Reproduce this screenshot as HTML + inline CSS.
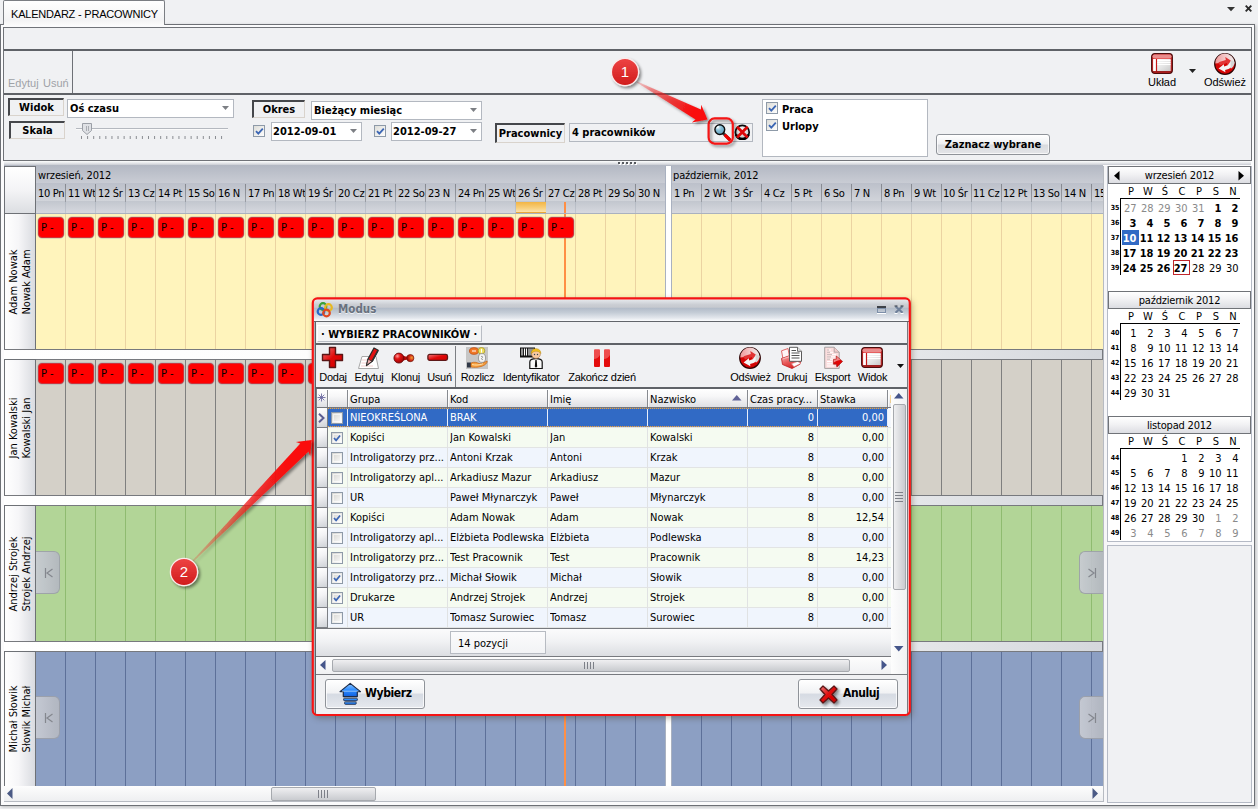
<!DOCTYPE html>
<html lang="pl"><head><meta charset="utf-8"><title>Kalendarz - Pracownicy</title>
<style>
html,body{margin:0;padding:0}
body{width:1258px;height:809px;overflow:hidden;background:#f0f1f3;position:relative;font-family:'DejaVu Sans Condensed','Liberation Sans',sans-serif;font-size:11px;color:#000}
div,svg{position:absolute;box-sizing:border-box}
.t{font-family:'DejaVu Sans Condensed','Liberation Sans',sans-serif;font-size:11px;line-height:13px;white-space:nowrap}
.a{font-family:'Liberation Sans',sans-serif;font-size:11px;line-height:12px;white-space:nowrap}
.rot{transform:rotate(-90deg);transform-origin:50% 50%}
</style></head>
<body>
<!-- part1 -->
<div style="left:0px;top:24px;width:1255px;height:782px;border:1px solid #6d7075;background:#fbfbfc;box-shadow:1px 1px 3px rgba(0,0,0,.22)"></div>
<div style="left:3px;top:0px;width:162px;height:25px;border:1px solid #7b7e83;border-bottom:none;border-radius:2px 2px 0 0;background:linear-gradient(#ffffff,#f3f3f4 80%,#fafafa)"></div>
<div class="a" style="left:11px;top:8px;letter-spacing:-0.21px">KALENDARZ - PRACOWNICY</div>
<svg style="left:1224px;top:3px" width="32" height="12"><path d="M3 4h8l-4 4.3z" fill="#333"/><path d="M21.7 2.7l5.6 5.6m0-5.6l-5.6 5.6" stroke="#2b2b2b" stroke-width="1.9" fill="none"/></svg>
<div style="left:3px;top:27px;width:1249px;height:134px;border:1px solid #707378;background:#f0f1f3"></div>
<div style="left:4px;top:49px;width:1247px;height:2px;background:#5f6267"></div>
<div style="left:4px;top:93px;width:1247px;height:2px;background:#5f6267"></div>
<div style="left:72px;top:51px;width:1px;height:42px;background:#6e7176"></div>
<div class="a" style="left:8px;top:77px;color:#9fa2a7">Edytuj</div>
<div class="a" style="left:43px;top:77px;color:#9fa2a7">Usuń</div>
<div class="t" style="left:8px;top:98px;width:56px;height:18px;border-top:2px solid #45474b;border-left:2px solid #45474b;border-right:1px solid #d9d3cc;border-bottom:1px solid #d9d3cc;background:#f0f1f3;text-align:center;font-weight:bold;line-height:15px">Widok</div>
<div class="t" style="left:9px;top:121px;width:56px;height:18px;border-top:2px solid #45474b;border-left:2px solid #45474b;border-right:1px solid #d9d3cc;border-bottom:1px solid #d9d3cc;background:#f0f1f3;text-align:center;font-weight:bold;line-height:15px">Skala</div>
<div class="t" style="left:252px;top:100px;width:53px;height:18px;border-top:2px solid #45474b;border-left:2px solid #45474b;border-right:1px solid #d9d3cc;border-bottom:1px solid #d9d3cc;background:#f0f1f3;text-align:center;font-weight:bold;line-height:15px">Okres</div>
<div class="t" style="left:495px;top:123px;width:70px;height:20px;border-top:2px solid #45474b;border-left:2px solid #45474b;border-right:1px solid #d9d3cc;border-bottom:1px solid #d9d3cc;background:#f0f1f3;text-align:center;font-weight:bold;line-height:17px">Pracownicy</div>
<div class="t" style="left:67px;top:99px;width:167px;height:19px;border:1px solid #b3b8c0;background:#fff;font-weight:bold;line-height:17px;padding-left:2px">Oś czasu<svg style="right:4px;top:6px" width="7" height="4"><path d="M0 0h7l-3.5 4z" fill="#7c7f84"/></svg></div>
<div class="t" style="left:311px;top:101px;width:171px;height:19px;border:1px solid #b3b8c0;background:#fff;font-weight:bold;line-height:17px;padding-left:2px">Bieżący miesiąc<svg style="right:4px;top:6px" width="7" height="4"><path d="M0 0h7l-3.5 4z" fill="#7c7f84"/></svg></div>
<div class="t" style="left:271px;top:122px;width:91px;height:19px;border:1px solid #b3b8c0;background:#fff;font-weight:bold;line-height:17px;padding-left:1px">2012-09-01<svg style="right:4px;top:6px" width="7" height="4"><path d="M0 0h7l-3.5 4z" fill="#7c7f84"/></svg></div>
<div class="t" style="left:391px;top:122px;width:91px;height:19px;border:1px solid #b3b8c0;background:#fff;font-weight:bold;line-height:17px;padding-left:1px">2012-09-27<svg style="right:4px;top:6px" width="7" height="4"><path d="M0 0h7l-3.5 4z" fill="#7c7f84"/></svg></div>
<div style="left:76px;top:128px;width:152px;height:1px;background:#b4b8bf"></div>
<div style="left:76px;top:129px;width:152px;height:1px;background:#fafafa"></div>
<svg style="left:81px;top:122px" width="13" height="14"><path d="M1.5 1.5h9v7l-4.5 4-4.5-4z" fill="#dfe1e5" stroke="#9b9fa6"/><path d="M5.5 4v5M7.5 4v5" stroke="#aaadb3"/></svg>
<svg style="left:81px;top:136px" width="150" height="4"><rect x="0.00" y="0" width="1" height="3" fill="#8a8d92"/><rect x="6.09" y="0" width="1" height="3" fill="#8a8d92"/><rect x="12.18" y="0" width="1" height="3" fill="#8a8d92"/><rect x="18.27" y="0" width="1" height="3" fill="#8a8d92"/><rect x="24.36" y="0" width="1" height="3" fill="#8a8d92"/><rect x="30.45" y="0" width="1" height="3" fill="#8a8d92"/><rect x="36.54" y="0" width="1" height="3" fill="#8a8d92"/><rect x="42.63" y="0" width="1" height="3" fill="#8a8d92"/><rect x="48.72" y="0" width="1" height="3" fill="#8a8d92"/><rect x="54.81" y="0" width="1" height="3" fill="#8a8d92"/><rect x="60.90" y="0" width="1" height="3" fill="#8a8d92"/><rect x="66.99" y="0" width="1" height="3" fill="#8a8d92"/><rect x="73.08" y="0" width="1" height="3" fill="#8a8d92"/><rect x="79.17" y="0" width="1" height="3" fill="#8a8d92"/><rect x="85.26" y="0" width="1" height="3" fill="#8a8d92"/><rect x="91.35" y="0" width="1" height="3" fill="#8a8d92"/><rect x="97.44" y="0" width="1" height="3" fill="#8a8d92"/><rect x="103.53" y="0" width="1" height="3" fill="#8a8d92"/><rect x="109.62" y="0" width="1" height="3" fill="#8a8d92"/><rect x="115.71" y="0" width="1" height="3" fill="#8a8d92"/><rect x="121.80" y="0" width="1" height="3" fill="#8a8d92"/><rect x="127.89" y="0" width="1" height="3" fill="#8a8d92"/><rect x="133.98" y="0" width="1" height="3" fill="#8a8d92"/><rect x="140.07" y="0" width="1" height="3" fill="#8a8d92"/></svg>
<svg style="left:253px;top:125px" width="12" height="12"><defs><linearGradient id="cg253_125" x1="0" y1="0" x2="1" y2="1"><stop offset="0" stop-color="#dcdcd7"/><stop offset="1" stop-color="#ffffff"/></linearGradient></defs><rect x=".5" y=".5" width="11" height="11" fill="url(#cg253_125)" stroke="#8e9aa8"/><path d="M3 6.2l2.3 2.5 4.5-5" stroke="#3c66b4" stroke-width="1.8" fill="none"/></svg>
<svg style="left:374px;top:125px" width="12" height="12"><defs><linearGradient id="cg374_125" x1="0" y1="0" x2="1" y2="1"><stop offset="0" stop-color="#dcdcd7"/><stop offset="1" stop-color="#ffffff"/></linearGradient></defs><rect x=".5" y=".5" width="11" height="11" fill="url(#cg374_125)" stroke="#8e9aa8"/><path d="M3 6.2l2.3 2.5 4.5-5" stroke="#3c66b4" stroke-width="1.8" fill="none"/></svg>
<div class="t" style="left:569px;top:123px;width:182px;height:17px;border:1px solid #b3b8c0;background:#f0f1f3;font-weight:bold;line-height:18px;padding-left:2px;box-sizing:content-box;width:180px">4 pracowników</div>
<div style="left:762px;top:99px;width:166px;height:58px;border:1px solid #b3b8c0;background:#fff"></div>
<svg style="left:766px;top:102px" width="12" height="12"><defs><linearGradient id="cg766_102" x1="0" y1="0" x2="1" y2="1"><stop offset="0" stop-color="#dcdcd7"/><stop offset="1" stop-color="#ffffff"/></linearGradient></defs><rect x=".5" y=".5" width="11" height="11" fill="url(#cg766_102)" stroke="#8e9aa8"/><path d="M3 6.2l2.3 2.5 4.5-5" stroke="#3c66b4" stroke-width="1.8" fill="none"/></svg>
<svg style="left:766px;top:119px" width="12" height="12"><defs><linearGradient id="cg766_119" x1="0" y1="0" x2="1" y2="1"><stop offset="0" stop-color="#dcdcd7"/><stop offset="1" stop-color="#ffffff"/></linearGradient></defs><rect x=".5" y=".5" width="11" height="11" fill="url(#cg766_119)" stroke="#8e9aa8"/><path d="M3 6.2l2.3 2.5 4.5-5" stroke="#3c66b4" stroke-width="1.8" fill="none"/></svg>
<div class="t" style="left:782px;top:103px;font-weight:bold">Praca</div>
<div class="t" style="left:782px;top:120px;font-weight:bold">Urlopy</div>
<div class="t" style="left:936px;top:134px;width:114px;height:21px;border:1px solid #8f9399;border-radius:3px;background:linear-gradient(#ffffff,#f0f1f3 45%,#d9dbdf 55%,#e4e5e8);text-align:center;font-weight:bold;line-height:19px;box-shadow:inset 0 0 0 1px rgba(255,255,255,.7)">Zaznacz wybrane</div>
<div class="a" style="left:1132.0px;width:60px;text-align:center;top:76px;">Układ</div>
<div class="a" style="left:1195.0px;width:60px;text-align:center;top:76px;">Odśwież</div>
<svg style="left:1189px;top:69px" width="7" height="4"><path d="M0 0h7l-3.5 4z" fill="#222"/></svg>
<!-- part2 -->
<div style="left:4px;top:161px;width:1247px;height:4px;background:linear-gradient(#fdfdfd,#e6e8eb 50%,#c9ccd3)"></div>
<svg style="left:617px;top:161px" width="24" height="5"><rect x="2" y="2" width="2" height="2" fill="#fff"/><rect x="1" y="1" width="2" height="2" fill="#55585d"/><rect x="6" y="2" width="2" height="2" fill="#fff"/><rect x="5" y="1" width="2" height="2" fill="#55585d"/><rect x="10" y="2" width="2" height="2" fill="#fff"/><rect x="9" y="1" width="2" height="2" fill="#55585d"/><rect x="14" y="2" width="2" height="2" fill="#fff"/><rect x="13" y="1" width="2" height="2" fill="#55585d"/><rect x="18" y="2" width="2" height="2" fill="#fff"/><rect x="17" y="1" width="2" height="2" fill="#55585d"/></svg>
<div style="left:4px;top:165px;width:1099px;height:18px;background:linear-gradient(#b3b8c3,#c9ccd4)"></div>
<div style="left:4px;top:183px;width:1099px;height:18px;background:linear-gradient(#bcc0ca,#d1d4da)"></div>
<div style="left:4px;top:201px;width:1099px;height:13px;background:linear-gradient(#c2c6ce,#d8dae0)"></div>
<div style="left:65px;top:184px;width:1px;height:18px;background:linear-gradient(#85888f,#9a9da4)"></div>
<div style="left:65px;top:202px;width:1px;height:11px;background:rgba(120,130,150,.22)"></div>
<div style="left:95px;top:184px;width:1px;height:18px;background:linear-gradient(#85888f,#9a9da4)"></div>
<div style="left:95px;top:202px;width:1px;height:11px;background:rgba(120,130,150,.22)"></div>
<div style="left:125px;top:184px;width:1px;height:18px;background:linear-gradient(#85888f,#9a9da4)"></div>
<div style="left:125px;top:202px;width:1px;height:11px;background:rgba(120,130,150,.22)"></div>
<div style="left:155px;top:184px;width:1px;height:18px;background:linear-gradient(#85888f,#9a9da4)"></div>
<div style="left:155px;top:202px;width:1px;height:11px;background:rgba(120,130,150,.22)"></div>
<div style="left:185px;top:184px;width:1px;height:18px;background:linear-gradient(#85888f,#9a9da4)"></div>
<div style="left:185px;top:202px;width:1px;height:11px;background:rgba(120,130,150,.22)"></div>
<div style="left:215px;top:184px;width:1px;height:18px;background:linear-gradient(#85888f,#9a9da4)"></div>
<div style="left:215px;top:202px;width:1px;height:11px;background:rgba(120,130,150,.22)"></div>
<div style="left:245px;top:184px;width:1px;height:18px;background:linear-gradient(#85888f,#9a9da4)"></div>
<div style="left:245px;top:202px;width:1px;height:11px;background:rgba(120,130,150,.22)"></div>
<div style="left:275px;top:184px;width:1px;height:18px;background:linear-gradient(#85888f,#9a9da4)"></div>
<div style="left:275px;top:202px;width:1px;height:11px;background:rgba(120,130,150,.22)"></div>
<div style="left:305px;top:184px;width:1px;height:18px;background:linear-gradient(#85888f,#9a9da4)"></div>
<div style="left:305px;top:202px;width:1px;height:11px;background:rgba(120,130,150,.22)"></div>
<div style="left:335px;top:184px;width:1px;height:18px;background:linear-gradient(#85888f,#9a9da4)"></div>
<div style="left:335px;top:202px;width:1px;height:11px;background:rgba(120,130,150,.22)"></div>
<div style="left:365px;top:184px;width:1px;height:18px;background:linear-gradient(#85888f,#9a9da4)"></div>
<div style="left:365px;top:202px;width:1px;height:11px;background:rgba(120,130,150,.22)"></div>
<div style="left:395px;top:184px;width:1px;height:18px;background:linear-gradient(#85888f,#9a9da4)"></div>
<div style="left:395px;top:202px;width:1px;height:11px;background:rgba(120,130,150,.22)"></div>
<div style="left:425px;top:184px;width:1px;height:18px;background:linear-gradient(#85888f,#9a9da4)"></div>
<div style="left:425px;top:202px;width:1px;height:11px;background:rgba(120,130,150,.22)"></div>
<div style="left:455px;top:184px;width:1px;height:18px;background:linear-gradient(#85888f,#9a9da4)"></div>
<div style="left:455px;top:202px;width:1px;height:11px;background:rgba(120,130,150,.22)"></div>
<div style="left:485px;top:184px;width:1px;height:18px;background:linear-gradient(#85888f,#9a9da4)"></div>
<div style="left:485px;top:202px;width:1px;height:11px;background:rgba(120,130,150,.22)"></div>
<div style="left:515px;top:184px;width:1px;height:18px;background:linear-gradient(#85888f,#9a9da4)"></div>
<div style="left:515px;top:202px;width:1px;height:11px;background:rgba(120,130,150,.22)"></div>
<div style="left:545px;top:184px;width:1px;height:18px;background:linear-gradient(#85888f,#9a9da4)"></div>
<div style="left:545px;top:202px;width:1px;height:11px;background:rgba(120,130,150,.22)"></div>
<div style="left:575px;top:184px;width:1px;height:18px;background:linear-gradient(#85888f,#9a9da4)"></div>
<div style="left:575px;top:202px;width:1px;height:11px;background:rgba(120,130,150,.22)"></div>
<div style="left:605px;top:184px;width:1px;height:18px;background:linear-gradient(#85888f,#9a9da4)"></div>
<div style="left:605px;top:202px;width:1px;height:11px;background:rgba(120,130,150,.22)"></div>
<div style="left:635px;top:184px;width:1px;height:18px;background:linear-gradient(#85888f,#9a9da4)"></div>
<div style="left:635px;top:202px;width:1px;height:11px;background:rgba(120,130,150,.22)"></div>
<div style="left:665px;top:184px;width:1px;height:18px;background:linear-gradient(#85888f,#9a9da4)"></div>
<div style="left:665px;top:202px;width:1px;height:11px;background:rgba(120,130,150,.22)"></div>
<div style="left:701px;top:184px;width:1px;height:18px;background:linear-gradient(#85888f,#9a9da4)"></div>
<div style="left:701px;top:202px;width:1px;height:11px;background:rgba(120,130,150,.22)"></div>
<div style="left:731px;top:184px;width:1px;height:18px;background:linear-gradient(#85888f,#9a9da4)"></div>
<div style="left:731px;top:202px;width:1px;height:11px;background:rgba(120,130,150,.22)"></div>
<div style="left:761px;top:184px;width:1px;height:18px;background:linear-gradient(#85888f,#9a9da4)"></div>
<div style="left:761px;top:202px;width:1px;height:11px;background:rgba(120,130,150,.22)"></div>
<div style="left:791px;top:184px;width:1px;height:18px;background:linear-gradient(#85888f,#9a9da4)"></div>
<div style="left:791px;top:202px;width:1px;height:11px;background:rgba(120,130,150,.22)"></div>
<div style="left:821px;top:184px;width:1px;height:18px;background:linear-gradient(#85888f,#9a9da4)"></div>
<div style="left:821px;top:202px;width:1px;height:11px;background:rgba(120,130,150,.22)"></div>
<div style="left:851px;top:184px;width:1px;height:18px;background:linear-gradient(#85888f,#9a9da4)"></div>
<div style="left:851px;top:202px;width:1px;height:11px;background:rgba(120,130,150,.22)"></div>
<div style="left:881px;top:184px;width:1px;height:18px;background:linear-gradient(#85888f,#9a9da4)"></div>
<div style="left:881px;top:202px;width:1px;height:11px;background:rgba(120,130,150,.22)"></div>
<div style="left:911px;top:184px;width:1px;height:18px;background:linear-gradient(#85888f,#9a9da4)"></div>
<div style="left:911px;top:202px;width:1px;height:11px;background:rgba(120,130,150,.22)"></div>
<div style="left:941px;top:184px;width:1px;height:18px;background:linear-gradient(#85888f,#9a9da4)"></div>
<div style="left:941px;top:202px;width:1px;height:11px;background:rgba(120,130,150,.22)"></div>
<div style="left:971px;top:184px;width:1px;height:18px;background:linear-gradient(#85888f,#9a9da4)"></div>
<div style="left:971px;top:202px;width:1px;height:11px;background:rgba(120,130,150,.22)"></div>
<div style="left:1001px;top:184px;width:1px;height:18px;background:linear-gradient(#85888f,#9a9da4)"></div>
<div style="left:1001px;top:202px;width:1px;height:11px;background:rgba(120,130,150,.22)"></div>
<div style="left:1031px;top:184px;width:1px;height:18px;background:linear-gradient(#85888f,#9a9da4)"></div>
<div style="left:1031px;top:202px;width:1px;height:11px;background:rgba(120,130,150,.22)"></div>
<div style="left:1061px;top:184px;width:1px;height:18px;background:linear-gradient(#85888f,#9a9da4)"></div>
<div style="left:1061px;top:202px;width:1px;height:11px;background:rgba(120,130,150,.22)"></div>
<div style="left:1091px;top:184px;width:1px;height:18px;background:linear-gradient(#85888f,#9a9da4)"></div>
<div style="left:1091px;top:202px;width:1px;height:11px;background:rgba(120,130,150,.22)"></div>
<div style="left:4px;top:166px;width:32px;height:48px;border:1px solid #6e7176;background:linear-gradient(#ffffff,#f4f4f6 50%,#dcdee2)"></div>
<div class="t" style="left:38px;top:169px;letter-spacing:-0.15px">wrzesień, 2012</div>
<div class="t" style="left:673px;top:169px;letter-spacing:-0.15px">październik, 2012</div>
<div class="t" style="left:38px;top:187px;width:27px;height:14px;overflow:hidden;line-height:13px;white-space:nowrap;letter-spacing:-0.3px">10 Pn</div>
<div class="t" style="left:68px;top:187px;width:27px;height:14px;overflow:hidden;line-height:13px;white-space:nowrap;letter-spacing:-0.3px">11 Wt</div>
<div class="t" style="left:98px;top:187px;width:27px;height:14px;overflow:hidden;line-height:13px;white-space:nowrap;letter-spacing:-0.3px">12 Śr</div>
<div class="t" style="left:128px;top:187px;width:27px;height:14px;overflow:hidden;line-height:13px;white-space:nowrap;letter-spacing:-0.3px">13 Cz</div>
<div class="t" style="left:158px;top:187px;width:27px;height:14px;overflow:hidden;line-height:13px;white-space:nowrap;letter-spacing:-0.3px">14 Pt</div>
<div class="t" style="left:188px;top:187px;width:27px;height:14px;overflow:hidden;line-height:13px;white-space:nowrap;letter-spacing:-0.3px">15 So</div>
<div class="t" style="left:218px;top:187px;width:27px;height:14px;overflow:hidden;line-height:13px;white-space:nowrap;letter-spacing:-0.3px">16 N</div>
<div class="t" style="left:248px;top:187px;width:27px;height:14px;overflow:hidden;line-height:13px;white-space:nowrap;letter-spacing:-0.3px">17 Pn</div>
<div class="t" style="left:278px;top:187px;width:27px;height:14px;overflow:hidden;line-height:13px;white-space:nowrap;letter-spacing:-0.3px">18 Wt</div>
<div class="t" style="left:308px;top:187px;width:27px;height:14px;overflow:hidden;line-height:13px;white-space:nowrap;letter-spacing:-0.3px">19 Śr</div>
<div class="t" style="left:338px;top:187px;width:27px;height:14px;overflow:hidden;line-height:13px;white-space:nowrap;letter-spacing:-0.3px">20 Cz</div>
<div class="t" style="left:368px;top:187px;width:27px;height:14px;overflow:hidden;line-height:13px;white-space:nowrap;letter-spacing:-0.3px">21 Pt</div>
<div class="t" style="left:398px;top:187px;width:27px;height:14px;overflow:hidden;line-height:13px;white-space:nowrap;letter-spacing:-0.3px">22 So</div>
<div class="t" style="left:428px;top:187px;width:27px;height:14px;overflow:hidden;line-height:13px;white-space:nowrap;letter-spacing:-0.3px">23 N</div>
<div class="t" style="left:458px;top:187px;width:27px;height:14px;overflow:hidden;line-height:13px;white-space:nowrap;letter-spacing:-0.3px">24 Pn</div>
<div class="t" style="left:488px;top:187px;width:27px;height:14px;overflow:hidden;line-height:13px;white-space:nowrap;letter-spacing:-0.3px">25 Wt</div>
<div class="t" style="left:518px;top:187px;width:27px;height:14px;overflow:hidden;line-height:13px;white-space:nowrap;letter-spacing:-0.3px">26 Śr</div>
<div class="t" style="left:548px;top:187px;width:27px;height:14px;overflow:hidden;line-height:13px;white-space:nowrap;letter-spacing:-0.3px">27 Cz</div>
<div class="t" style="left:578px;top:187px;width:27px;height:14px;overflow:hidden;line-height:13px;white-space:nowrap;letter-spacing:-0.3px">28 Pt</div>
<div class="t" style="left:608px;top:187px;width:27px;height:14px;overflow:hidden;line-height:13px;white-space:nowrap;letter-spacing:-0.3px">29 So</div>
<div class="t" style="left:638px;top:187px;width:27px;height:14px;overflow:hidden;line-height:13px;white-space:nowrap;letter-spacing:-0.3px">30 N</div>
<div class="t" style="left:674px;top:187px;width:28px;height:14px;overflow:hidden;line-height:13px;white-space:nowrap;letter-spacing:-0.3px">1 Pn</div>
<div class="t" style="left:704px;top:187px;width:28px;height:14px;overflow:hidden;line-height:13px;white-space:nowrap;letter-spacing:-0.3px">2 Wt</div>
<div class="t" style="left:734px;top:187px;width:28px;height:14px;overflow:hidden;line-height:13px;white-space:nowrap;letter-spacing:-0.3px">3 Śr</div>
<div class="t" style="left:764px;top:187px;width:28px;height:14px;overflow:hidden;line-height:13px;white-space:nowrap;letter-spacing:-0.3px">4 Cz</div>
<div class="t" style="left:794px;top:187px;width:28px;height:14px;overflow:hidden;line-height:13px;white-space:nowrap;letter-spacing:-0.3px">5 Pt</div>
<div class="t" style="left:824px;top:187px;width:28px;height:14px;overflow:hidden;line-height:13px;white-space:nowrap;letter-spacing:-0.3px">6 So</div>
<div class="t" style="left:854px;top:187px;width:28px;height:14px;overflow:hidden;line-height:13px;white-space:nowrap;letter-spacing:-0.3px">7 N</div>
<div class="t" style="left:884px;top:187px;width:28px;height:14px;overflow:hidden;line-height:13px;white-space:nowrap;letter-spacing:-0.3px">8 Pn</div>
<div class="t" style="left:914px;top:187px;width:28px;height:14px;overflow:hidden;line-height:13px;white-space:nowrap;letter-spacing:-0.3px">9 Wt</div>
<div class="t" style="left:943px;top:187px;width:28px;height:14px;overflow:hidden;line-height:13px;white-space:nowrap;letter-spacing:-0.3px">10 Śr</div>
<div class="t" style="left:973px;top:187px;width:28px;height:14px;overflow:hidden;line-height:13px;white-space:nowrap;letter-spacing:-0.3px">11 Cz</div>
<div class="t" style="left:1003px;top:187px;width:28px;height:14px;overflow:hidden;line-height:13px;white-space:nowrap;letter-spacing:-0.3px">12 Pt</div>
<div class="t" style="left:1033px;top:187px;width:28px;height:14px;overflow:hidden;line-height:13px;white-space:nowrap;letter-spacing:-0.3px">13 So</div>
<div class="t" style="left:1064px;top:187px;width:28px;height:14px;overflow:hidden;line-height:13px;white-space:nowrap;letter-spacing:-0.3px">14 N</div>
<div class="t" style="left:1094px;top:187px;width:11px;height:14px;overflow:hidden;line-height:13px;white-space:nowrap;letter-spacing:-0.3px">15</div>
<div style="left:516px;top:202px;width:30px;height:11px;background:linear-gradient(#f3b544,#f8cf7c 60%,#fbe3ad);border-bottom:1px solid #eaa83a"></div>
<div style="left:36px;top:214px;width:630px;height:135px;background:repeating-linear-gradient(to right,transparent 0,transparent 29px,#ebd3a2 29px,#ebd3a2 30px),#fff4bc"></div>
<div style="left:672px;top:214px;width:431px;height:135px;background:repeating-linear-gradient(to right,transparent 0,transparent 29px,#ebd3a2 29px,#ebd3a2 30px),#fff4bc"></div>
<div style="left:4px;top:213px;width:32px;height:137px;border:1px solid #6e7176;background:linear-gradient(to right,#ffffff,#f6f6f8 45%,#d9dbe0)"></div>
<div style="left:4px;top:349px;width:1099px;height:1px;background:#77797e"></div>
<div style="left:4px;top:350px;width:1099px;height:9px;background:linear-gradient(to right,#ffffff,#fbfbfb 60%,#d4d7dc)"></div>
<div style="left:4px;top:359px;width:1099px;height:1px;background:#77797e"></div>
<div style="left:1102px;top:349px;width:1px;height:11px;background:#77797e"></div>
<div class="t rot" style="left:-55.5px;top:268.5px;width:150px;height:26px;line-height:13px;text-align:center">Adam Nowak<br>Nowak Adam</div>
<div style="left:36px;top:360px;width:630px;height:135px;background:repeating-linear-gradient(to right,transparent 0,transparent 29px,#7f7f7f 29px,#7f7f7f 30px),#d4d0c8"></div>
<div style="left:672px;top:360px;width:431px;height:135px;background:repeating-linear-gradient(to right,transparent 0,transparent 29px,#7f7f7f 29px,#7f7f7f 30px),#d4d0c8"></div>
<div style="left:4px;top:359px;width:32px;height:137px;border:1px solid #6e7176;background:linear-gradient(to right,#ffffff,#f6f6f8 45%,#d9dbe0)"></div>
<div style="left:4px;top:495px;width:1099px;height:1px;background:#77797e"></div>
<div style="left:4px;top:496px;width:1099px;height:9px;background:linear-gradient(to right,#ffffff,#fbfbfb 60%,#d4d7dc)"></div>
<div style="left:4px;top:505px;width:1099px;height:1px;background:#77797e"></div>
<div style="left:1102px;top:495px;width:1px;height:11px;background:#77797e"></div>
<div class="t rot" style="left:-55.5px;top:414.5px;width:150px;height:26px;line-height:13px;text-align:center">Jan Kowalski<br>Kowalski Jan</div>
<div style="left:36px;top:506px;width:630px;height:135px;background:repeating-linear-gradient(to right,transparent 0,transparent 29px,#8fbb70 29px,#8fbb70 30px),#b2d597"></div>
<div style="left:672px;top:506px;width:431px;height:135px;background:repeating-linear-gradient(to right,transparent 0,transparent 29px,#8fbb70 29px,#8fbb70 30px),#b2d597"></div>
<div style="left:4px;top:505px;width:32px;height:137px;border:1px solid #6e7176;background:linear-gradient(to right,#ffffff,#f6f6f8 45%,#d9dbe0)"></div>
<div style="left:4px;top:641px;width:1099px;height:1px;background:#77797e"></div>
<div style="left:4px;top:642px;width:1099px;height:9px;background:linear-gradient(to right,#ffffff,#fbfbfb 60%,#d4d7dc)"></div>
<div style="left:4px;top:651px;width:1099px;height:1px;background:#77797e"></div>
<div style="left:1102px;top:641px;width:1px;height:11px;background:#77797e"></div>
<div class="t rot" style="left:-55.5px;top:560.5px;width:150px;height:26px;line-height:13px;text-align:center">Andrzej Strojek<br>Strojek Andrzej</div>
<div style="left:36px;top:652px;width:630px;height:134px;background:repeating-linear-gradient(to right,transparent 0,transparent 29px,#5d7099 29px,#5d7099 30px),#8c9fc3"></div>
<div style="left:672px;top:652px;width:431px;height:134px;background:repeating-linear-gradient(to right,transparent 0,transparent 29px,#5d7099 29px,#5d7099 30px),#8c9fc3"></div>
<div style="left:4px;top:651px;width:32px;height:135px;border:1px solid #6e7176;border-bottom:none;background:linear-gradient(to right,#ffffff,#f6f6f8 45%,#d9dbe0)"></div>
<div class="t rot" style="left:-55.5px;top:706.0px;width:150px;height:26px;line-height:13px;text-align:center">Michał Słowik<br>Słowik Michał</div>
<div style="left:564px;top:202px;width:2px;height:584px;background:#ff8f45"></div>
<div class="t" style="left:38px;top:217px;width:26px;height:21px;background:#ff0000;border:1px solid #d0303a;border-radius:4px;line-height:19px;padding-left:2px;box-shadow:0 0 0 .5px rgba(120,140,150,.5)">P -</div>
<div class="t" style="left:68px;top:217px;width:26px;height:21px;background:#ff0000;border:1px solid #d0303a;border-radius:4px;line-height:19px;padding-left:2px;box-shadow:0 0 0 .5px rgba(120,140,150,.5)">P -</div>
<div class="t" style="left:98px;top:217px;width:26px;height:21px;background:#ff0000;border:1px solid #d0303a;border-radius:4px;line-height:19px;padding-left:2px;box-shadow:0 0 0 .5px rgba(120,140,150,.5)">P -</div>
<div class="t" style="left:128px;top:217px;width:26px;height:21px;background:#ff0000;border:1px solid #d0303a;border-radius:4px;line-height:19px;padding-left:2px;box-shadow:0 0 0 .5px rgba(120,140,150,.5)">P -</div>
<div class="t" style="left:158px;top:217px;width:26px;height:21px;background:#ff0000;border:1px solid #d0303a;border-radius:4px;line-height:19px;padding-left:2px;box-shadow:0 0 0 .5px rgba(120,140,150,.5)">P -</div>
<div class="t" style="left:188px;top:217px;width:26px;height:21px;background:#ff0000;border:1px solid #d0303a;border-radius:4px;line-height:19px;padding-left:2px;box-shadow:0 0 0 .5px rgba(120,140,150,.5)">P -</div>
<div class="t" style="left:218px;top:217px;width:26px;height:21px;background:#ff0000;border:1px solid #d0303a;border-radius:4px;line-height:19px;padding-left:2px;box-shadow:0 0 0 .5px rgba(120,140,150,.5)">P -</div>
<div class="t" style="left:248px;top:217px;width:26px;height:21px;background:#ff0000;border:1px solid #d0303a;border-radius:4px;line-height:19px;padding-left:2px;box-shadow:0 0 0 .5px rgba(120,140,150,.5)">P -</div>
<div class="t" style="left:278px;top:217px;width:26px;height:21px;background:#ff0000;border:1px solid #d0303a;border-radius:4px;line-height:19px;padding-left:2px;box-shadow:0 0 0 .5px rgba(120,140,150,.5)">P -</div>
<div class="t" style="left:308px;top:217px;width:26px;height:21px;background:#ff0000;border:1px solid #d0303a;border-radius:4px;line-height:19px;padding-left:2px;box-shadow:0 0 0 .5px rgba(120,140,150,.5)">P -</div>
<div class="t" style="left:338px;top:217px;width:26px;height:21px;background:#ff0000;border:1px solid #d0303a;border-radius:4px;line-height:19px;padding-left:2px;box-shadow:0 0 0 .5px rgba(120,140,150,.5)">P -</div>
<div class="t" style="left:368px;top:217px;width:26px;height:21px;background:#ff0000;border:1px solid #d0303a;border-radius:4px;line-height:19px;padding-left:2px;box-shadow:0 0 0 .5px rgba(120,140,150,.5)">P -</div>
<div class="t" style="left:398px;top:217px;width:26px;height:21px;background:#ff0000;border:1px solid #d0303a;border-radius:4px;line-height:19px;padding-left:2px;box-shadow:0 0 0 .5px rgba(120,140,150,.5)">P -</div>
<div class="t" style="left:428px;top:217px;width:26px;height:21px;background:#ff0000;border:1px solid #d0303a;border-radius:4px;line-height:19px;padding-left:2px;box-shadow:0 0 0 .5px rgba(120,140,150,.5)">P -</div>
<div class="t" style="left:458px;top:217px;width:26px;height:21px;background:#ff0000;border:1px solid #d0303a;border-radius:4px;line-height:19px;padding-left:2px;box-shadow:0 0 0 .5px rgba(120,140,150,.5)">P -</div>
<div class="t" style="left:488px;top:217px;width:26px;height:21px;background:#ff0000;border:1px solid #d0303a;border-radius:4px;line-height:19px;padding-left:2px;box-shadow:0 0 0 .5px rgba(120,140,150,.5)">P -</div>
<div class="t" style="left:518px;top:217px;width:26px;height:21px;background:#ff0000;border:1px solid #d0303a;border-radius:4px;line-height:19px;padding-left:2px;box-shadow:0 0 0 .5px rgba(120,140,150,.5)">P -</div>
<div class="t" style="left:548px;top:217px;width:26px;height:21px;background:#ff0000;border:1px solid #d0303a;border-radius:4px;line-height:19px;padding-left:2px;box-shadow:0 0 0 .5px rgba(120,140,150,.5)">P -</div>
<div class="t" style="left:38px;top:363px;width:26px;height:21px;background:#ff0000;border:1px solid #d0303a;border-radius:4px;line-height:19px;padding-left:2px;box-shadow:0 0 0 .5px rgba(120,140,150,.5)">P -</div>
<div class="t" style="left:68px;top:363px;width:26px;height:21px;background:#ff0000;border:1px solid #d0303a;border-radius:4px;line-height:19px;padding-left:2px;box-shadow:0 0 0 .5px rgba(120,140,150,.5)">P -</div>
<div class="t" style="left:98px;top:363px;width:26px;height:21px;background:#ff0000;border:1px solid #d0303a;border-radius:4px;line-height:19px;padding-left:2px;box-shadow:0 0 0 .5px rgba(120,140,150,.5)">P -</div>
<div class="t" style="left:128px;top:363px;width:26px;height:21px;background:#ff0000;border:1px solid #d0303a;border-radius:4px;line-height:19px;padding-left:2px;box-shadow:0 0 0 .5px rgba(120,140,150,.5)">P -</div>
<div class="t" style="left:158px;top:363px;width:26px;height:21px;background:#ff0000;border:1px solid #d0303a;border-radius:4px;line-height:19px;padding-left:2px;box-shadow:0 0 0 .5px rgba(120,140,150,.5)">P -</div>
<div class="t" style="left:188px;top:363px;width:26px;height:21px;background:#ff0000;border:1px solid #d0303a;border-radius:4px;line-height:19px;padding-left:2px;box-shadow:0 0 0 .5px rgba(120,140,150,.5)">P -</div>
<div class="t" style="left:218px;top:363px;width:26px;height:21px;background:#ff0000;border:1px solid #d0303a;border-radius:4px;line-height:19px;padding-left:2px;box-shadow:0 0 0 .5px rgba(120,140,150,.5)">P -</div>
<div class="t" style="left:248px;top:363px;width:26px;height:21px;background:#ff0000;border:1px solid #d0303a;border-radius:4px;line-height:19px;padding-left:2px;box-shadow:0 0 0 .5px rgba(120,140,150,.5)">P -</div>
<div class="t" style="left:278px;top:363px;width:26px;height:21px;background:#ff0000;border:1px solid #d0303a;border-radius:4px;line-height:19px;padding-left:2px;box-shadow:0 0 0 .5px rgba(120,140,150,.5)">P -</div>
<div class="t" style="left:308px;top:363px;width:26px;height:21px;background:#ff0000;border:1px solid #d0303a;border-radius:4px;line-height:19px;padding-left:2px;box-shadow:0 0 0 .5px rgba(120,140,150,.5)">P -</div>
<div class="t" style="left:338px;top:363px;width:26px;height:21px;background:#ff0000;border:1px solid #d0303a;border-radius:4px;line-height:19px;padding-left:2px;box-shadow:0 0 0 .5px rgba(120,140,150,.5)">P -</div>
<div class="t" style="left:368px;top:363px;width:26px;height:21px;background:#ff0000;border:1px solid #d0303a;border-radius:4px;line-height:19px;padding-left:2px;box-shadow:0 0 0 .5px rgba(120,140,150,.5)">P -</div>
<div class="t" style="left:398px;top:363px;width:26px;height:21px;background:#ff0000;border:1px solid #d0303a;border-radius:4px;line-height:19px;padding-left:2px;box-shadow:0 0 0 .5px rgba(120,140,150,.5)">P -</div>
<div class="t" style="left:428px;top:363px;width:26px;height:21px;background:#ff0000;border:1px solid #d0303a;border-radius:4px;line-height:19px;padding-left:2px;box-shadow:0 0 0 .5px rgba(120,140,150,.5)">P -</div>
<div class="t" style="left:458px;top:363px;width:26px;height:21px;background:#ff0000;border:1px solid #d0303a;border-radius:4px;line-height:19px;padding-left:2px;box-shadow:0 0 0 .5px rgba(120,140,150,.5)">P -</div>
<div class="t" style="left:488px;top:363px;width:26px;height:21px;background:#ff0000;border:1px solid #d0303a;border-radius:4px;line-height:19px;padding-left:2px;box-shadow:0 0 0 .5px rgba(120,140,150,.5)">P -</div>
<div class="t" style="left:518px;top:363px;width:26px;height:21px;background:#ff0000;border:1px solid #d0303a;border-radius:4px;line-height:19px;padding-left:2px;box-shadow:0 0 0 .5px rgba(120,140,150,.5)">P -</div>
<div class="t" style="left:548px;top:363px;width:26px;height:21px;background:#ff0000;border:1px solid #d0303a;border-radius:4px;line-height:19px;padding-left:2px;box-shadow:0 0 0 .5px rgba(120,140,150,.5)">P -</div>
<div style="left:36px;top:213px;width:1067px;height:1px;background:#aab1bf"></div>
<div style="left:665px;top:166px;width:7px;height:620px;background:#fff;border-left:1px solid #a9b1c0;border-right:1px solid #a9b1c0"></div>
<div style="left:36px;top:551px;width:24px;height:43px;background:linear-gradient(to right,#c9ccd4,#b4b8c1);border:1px solid #9da1aa;border-left:none;border-radius:0 6px 6px 0;opacity:.93"></div>
<svg style="left:44px;top:568px" width="10" height="10"><path d="M1.5 0v10M8.5 1L3 5l5.500 4" stroke="#84878e" stroke-width="1.2" fill="none"/></svg>
<div style="left:1079px;top:551px;width:24px;height:43px;background:linear-gradient(to right,#c9ccd4,#b4b8c1);border:1px solid #9da1aa;border-right:none;border-radius:6px 0 0 6px;opacity:.93"></div>
<svg style="left:1087px;top:568px" width="10" height="10"><path d="M8.5 0v10M1.5 1L7 5l-5.500 4" stroke="#84878e" stroke-width="1.2" fill="none"/></svg>
<div style="left:36px;top:696px;width:24px;height:43px;background:linear-gradient(to right,#c9ccd4,#b4b8c1);border:1px solid #9da1aa;border-left:none;border-radius:0 6px 6px 0;opacity:.93"></div>
<svg style="left:44px;top:713px" width="10" height="10"><path d="M1.5 0v10M8.5 1L3 5l5.500 4" stroke="#84878e" stroke-width="1.2" fill="none"/></svg>
<div style="left:1079px;top:696px;width:24px;height:43px;background:linear-gradient(to right,#c9ccd4,#b4b8c1);border:1px solid #9da1aa;border-right:none;border-radius:6px 0 0 6px;opacity:.93"></div>
<svg style="left:1087px;top:713px" width="10" height="10"><path d="M8.5 0v10M1.5 1L7 5l-5.500 4" stroke="#84878e" stroke-width="1.2" fill="none"/></svg>
<div style="left:4px;top:786px;width:1099px;height:15px;background:linear-gradient(#fdfdfd,#eeeff1)"></div>
<svg style="left:7px;top:788px" width="6" height="11"><path d="M5.500 0v11L0 5.500z" fill="#4b5a85"/></svg>
<svg style="left:1092px;top:788px" width="6" height="11"><path d="M.5 0v11L6 5.500z" fill="#4b5a85"/></svg>
<div style="left:271px;top:787px;width:105px;height:14px;border:1px solid #a6a9ae;border-radius:2px;background:linear-gradient(#efeff1,#dcdde0 50%,#c9cbcf)"></div>
<svg style="left:318px;top:790px" width="12" height="9"><path d="M.5 0v8M3.500 0v8M6.500 0v8M9.500 0v8" stroke="#7d8088"/></svg>
<div style="left:4px;top:801px;width:1100px;height:1px;background:#b7bbc2"></div>
<div style="left:1103px;top:166px;width:1px;height:636px;background:#b7bbc2"></div>
<!-- part3 -->
<div style="left:1104px;top:166px;width:3px;height:636px;background:#f6f6f8"></div>
<div style="left:1107px;top:166px;width:145px;height:376px;border:1px solid #b5bac5;background:#fff"></div>
<div style="left:1107px;top:542px;width:145px;height:3px;background:#f8f8fa"></div>
<div style="left:1107px;top:545px;width:145px;height:258px;border:1px solid #b5bac5;background:#f0f1f3"></div>
<div style="left:1108px;top:166px;width:143px;height:18px;border:1px solid #707378;background:linear-gradient(#ffffff,#f2f2f4 45%,#dcdde2)"></div>
<div class="t" style="left:1109.5px;width:140px;text-align:center;top:169px;letter-spacing:-0.2px">wrzesień 2012</div>
<svg style="left:1114px;top:171px" width="6" height="10"><path d="M5.500 0v9.500L0 4.750z" fill="#000"/></svg>
<svg style="left:1238px;top:171px" width="6" height="10"><path d="M.5 0v9.500L6 4.750z" fill="#000"/></svg>
<div class="t" style="left:1122.5px;width:17px;text-align:center;top:185px;">P</div>
<div class="t" style="left:1139.5px;width:17px;text-align:center;top:185px;">W</div>
<div class="t" style="left:1156.5px;width:17px;text-align:center;top:185px;">Ś</div>
<div class="t" style="left:1173.5px;width:17px;text-align:center;top:185px;">C</div>
<div class="t" style="left:1190.5px;width:17px;text-align:center;top:185px;">P</div>
<div class="t" style="left:1207.5px;width:17px;text-align:center;top:185px;">S</div>
<div class="t" style="left:1224.5px;width:17px;text-align:center;top:185px;">N</div>
<div style="left:1120px;top:198px;width:120px;height:1px;background:#000"></div>
<div style="left:1120px;top:198px;width:1px;height:77px;background:#000"></div>
<div class="t" style="right:138.5px;top:204px;font-size:7px;font-weight:bold;line-height:9px">35</div>
<div class="t" style="right:121.5px;top:202px;color:#8a8a8a;">27</div>
<div class="t" style="right:104.5px;top:202px;color:#8a8a8a;">28</div>
<div class="t" style="right:87.5px;top:202px;color:#8a8a8a;">29</div>
<div class="t" style="right:70.5px;top:202px;color:#8a8a8a;">30</div>
<div class="t" style="right:53.5px;top:202px;color:#8a8a8a;">31</div>
<div class="t" style="right:36.5px;top:202px;font-weight:bold;">1</div>
<div class="t" style="right:19.5px;top:202px;font-weight:bold;">2</div>
<div class="t" style="right:138.5px;top:219px;font-size:7px;font-weight:bold;line-height:9px">36</div>
<div class="t" style="right:121.5px;top:217px;font-weight:bold;">3</div>
<div class="t" style="right:104.5px;top:217px;font-weight:bold;">4</div>
<div class="t" style="right:87.5px;top:217px;font-weight:bold;">5</div>
<div class="t" style="right:70.5px;top:217px;font-weight:bold;">6</div>
<div class="t" style="right:53.5px;top:217px;font-weight:bold;">7</div>
<div class="t" style="right:36.5px;top:217px;font-weight:bold;">8</div>
<div class="t" style="right:19.5px;top:217px;font-weight:bold;">9</div>
<div class="t" style="right:138.5px;top:234px;font-size:7px;font-weight:bold;line-height:9px">37</div>
<div style="left:1122px;top:230px;width:17px;height:15px;background:#316ac5"></div>
<div class="t" style="right:121.5px;top:232px;font-weight:bold;color:#fff;">10</div>
<div class="t" style="right:104.5px;top:232px;font-weight:bold;">11</div>
<div class="t" style="right:87.5px;top:232px;font-weight:bold;">12</div>
<div class="t" style="right:70.5px;top:232px;font-weight:bold;">13</div>
<div class="t" style="right:53.5px;top:232px;font-weight:bold;">14</div>
<div class="t" style="right:36.5px;top:232px;font-weight:bold;">15</div>
<div class="t" style="right:19.5px;top:232px;font-weight:bold;">16</div>
<div class="t" style="right:138.5px;top:249px;font-size:7px;font-weight:bold;line-height:9px">38</div>
<div class="t" style="right:121.5px;top:247px;font-weight:bold;">17</div>
<div class="t" style="right:104.5px;top:247px;font-weight:bold;">18</div>
<div class="t" style="right:87.5px;top:247px;font-weight:bold;">19</div>
<div class="t" style="right:70.5px;top:247px;font-weight:bold;">20</div>
<div class="t" style="right:53.5px;top:247px;font-weight:bold;">21</div>
<div class="t" style="right:36.5px;top:247px;font-weight:bold;">22</div>
<div class="t" style="right:19.5px;top:247px;font-weight:bold;">23</div>
<div class="t" style="right:138.5px;top:264px;font-size:7px;font-weight:bold;line-height:9px">39</div>
<div class="t" style="right:121.5px;top:262px;font-weight:bold;">24</div>
<div class="t" style="right:104.5px;top:262px;font-weight:bold;">25</div>
<div class="t" style="right:87.5px;top:262px;font-weight:bold;">26</div>
<div style="left:1173px;top:260px;width:17px;height:15px;border:1px solid #c0262c"></div>
<div class="t" style="right:70.5px;top:262px;font-weight:bold;">27</div>
<div class="t" style="right:53.5px;top:262px;">28</div>
<div class="t" style="right:36.5px;top:262px;">29</div>
<div class="t" style="right:19.5px;top:262px;">30</div>
<div style="left:1108px;top:291px;width:143px;height:18px;border:1px solid #707378;background:linear-gradient(#ffffff,#f2f2f4 45%,#dcdde2)"></div>
<div class="t" style="left:1109.5px;width:140px;text-align:center;top:294px;letter-spacing:-0.2px">październik 2012</div>
<div class="t" style="left:1122.5px;width:17px;text-align:center;top:310px;">P</div>
<div class="t" style="left:1139.5px;width:17px;text-align:center;top:310px;">W</div>
<div class="t" style="left:1156.5px;width:17px;text-align:center;top:310px;">Ś</div>
<div class="t" style="left:1173.5px;width:17px;text-align:center;top:310px;">C</div>
<div class="t" style="left:1190.5px;width:17px;text-align:center;top:310px;">P</div>
<div class="t" style="left:1207.5px;width:17px;text-align:center;top:310px;">S</div>
<div class="t" style="left:1224.5px;width:17px;text-align:center;top:310px;">N</div>
<div style="left:1120px;top:323px;width:120px;height:1px;background:#000"></div>
<div style="left:1120px;top:323px;width:1px;height:77px;background:#000"></div>
<div class="t" style="right:138.5px;top:329px;font-size:7px;font-weight:bold;line-height:9px">40</div>
<div class="t" style="right:121.5px;top:327px;">1</div>
<div class="t" style="right:104.5px;top:327px;">2</div>
<div class="t" style="right:87.5px;top:327px;">3</div>
<div class="t" style="right:70.5px;top:327px;">4</div>
<div class="t" style="right:53.5px;top:327px;">5</div>
<div class="t" style="right:36.5px;top:327px;">6</div>
<div class="t" style="right:19.5px;top:327px;">7</div>
<div class="t" style="right:138.5px;top:344px;font-size:7px;font-weight:bold;line-height:9px">41</div>
<div class="t" style="right:121.5px;top:342px;">8</div>
<div class="t" style="right:104.5px;top:342px;">9</div>
<div class="t" style="right:87.5px;top:342px;">10</div>
<div class="t" style="right:70.5px;top:342px;">11</div>
<div class="t" style="right:53.5px;top:342px;">12</div>
<div class="t" style="right:36.5px;top:342px;">13</div>
<div class="t" style="right:19.5px;top:342px;">14</div>
<div class="t" style="right:138.5px;top:359px;font-size:7px;font-weight:bold;line-height:9px">42</div>
<div class="t" style="right:121.5px;top:357px;">15</div>
<div class="t" style="right:104.5px;top:357px;">16</div>
<div class="t" style="right:87.5px;top:357px;">17</div>
<div class="t" style="right:70.5px;top:357px;">18</div>
<div class="t" style="right:53.5px;top:357px;">19</div>
<div class="t" style="right:36.5px;top:357px;">20</div>
<div class="t" style="right:19.5px;top:357px;">21</div>
<div class="t" style="right:138.5px;top:374px;font-size:7px;font-weight:bold;line-height:9px">43</div>
<div class="t" style="right:121.5px;top:372px;">22</div>
<div class="t" style="right:104.5px;top:372px;">23</div>
<div class="t" style="right:87.5px;top:372px;">24</div>
<div class="t" style="right:70.5px;top:372px;">25</div>
<div class="t" style="right:53.5px;top:372px;">26</div>
<div class="t" style="right:36.5px;top:372px;">27</div>
<div class="t" style="right:19.5px;top:372px;">28</div>
<div class="t" style="right:138.5px;top:389px;font-size:7px;font-weight:bold;line-height:9px">44</div>
<div class="t" style="right:121.5px;top:387px;">29</div>
<div class="t" style="right:104.5px;top:387px;">30</div>
<div class="t" style="right:87.5px;top:387px;">31</div>
<div style="left:1108px;top:416px;width:143px;height:18px;border:1px solid #707378;background:linear-gradient(#ffffff,#f2f2f4 45%,#dcdde2)"></div>
<div class="t" style="left:1109.5px;width:140px;text-align:center;top:419px;letter-spacing:-0.2px">listopad 2012</div>
<div class="t" style="left:1122.5px;width:17px;text-align:center;top:435px;">P</div>
<div class="t" style="left:1139.5px;width:17px;text-align:center;top:435px;">W</div>
<div class="t" style="left:1156.5px;width:17px;text-align:center;top:435px;">Ś</div>
<div class="t" style="left:1173.5px;width:17px;text-align:center;top:435px;">C</div>
<div class="t" style="left:1190.5px;width:17px;text-align:center;top:435px;">P</div>
<div class="t" style="left:1207.5px;width:17px;text-align:center;top:435px;">S</div>
<div class="t" style="left:1224.5px;width:17px;text-align:center;top:435px;">N</div>
<div style="left:1120px;top:448px;width:120px;height:1px;background:#000"></div>
<div style="left:1120px;top:448px;width:1px;height:92px;background:#000"></div>
<div class="t" style="right:138.5px;top:454px;font-size:7px;font-weight:bold;line-height:9px">44</div>
<div class="t" style="right:70.5px;top:452px;">1</div>
<div class="t" style="right:53.5px;top:452px;">2</div>
<div class="t" style="right:36.5px;top:452px;">3</div>
<div class="t" style="right:19.5px;top:452px;">4</div>
<div class="t" style="right:138.5px;top:469px;font-size:7px;font-weight:bold;line-height:9px">45</div>
<div class="t" style="right:121.5px;top:467px;">5</div>
<div class="t" style="right:104.5px;top:467px;">6</div>
<div class="t" style="right:87.5px;top:467px;">7</div>
<div class="t" style="right:70.5px;top:467px;">8</div>
<div class="t" style="right:53.5px;top:467px;">9</div>
<div class="t" style="right:36.5px;top:467px;">10</div>
<div class="t" style="right:19.5px;top:467px;">11</div>
<div class="t" style="right:138.5px;top:484px;font-size:7px;font-weight:bold;line-height:9px">46</div>
<div class="t" style="right:121.5px;top:482px;">12</div>
<div class="t" style="right:104.5px;top:482px;">13</div>
<div class="t" style="right:87.5px;top:482px;">14</div>
<div class="t" style="right:70.5px;top:482px;">15</div>
<div class="t" style="right:53.5px;top:482px;">16</div>
<div class="t" style="right:36.5px;top:482px;">17</div>
<div class="t" style="right:19.5px;top:482px;">18</div>
<div class="t" style="right:138.5px;top:499px;font-size:7px;font-weight:bold;line-height:9px">47</div>
<div class="t" style="right:121.5px;top:497px;">19</div>
<div class="t" style="right:104.5px;top:497px;">20</div>
<div class="t" style="right:87.5px;top:497px;">21</div>
<div class="t" style="right:70.5px;top:497px;">22</div>
<div class="t" style="right:53.5px;top:497px;">23</div>
<div class="t" style="right:36.5px;top:497px;">24</div>
<div class="t" style="right:19.5px;top:497px;">25</div>
<div class="t" style="right:138.5px;top:514px;font-size:7px;font-weight:bold;line-height:9px">48</div>
<div class="t" style="right:121.5px;top:512px;">26</div>
<div class="t" style="right:104.5px;top:512px;">27</div>
<div class="t" style="right:87.5px;top:512px;">28</div>
<div class="t" style="right:70.5px;top:512px;">29</div>
<div class="t" style="right:53.5px;top:512px;">30</div>
<div class="t" style="right:36.5px;top:512px;color:#8a8a8a;">1</div>
<div class="t" style="right:19.5px;top:512px;color:#8a8a8a;">2</div>
<div class="t" style="right:138.5px;top:529px;font-size:7px;font-weight:bold;line-height:9px">49</div>
<div class="t" style="right:121.5px;top:527px;color:#8a8a8a;">3</div>
<div class="t" style="right:104.5px;top:527px;color:#8a8a8a;">4</div>
<div class="t" style="right:87.5px;top:527px;color:#8a8a8a;">5</div>
<div class="t" style="right:70.5px;top:527px;color:#8a8a8a;">6</div>
<div class="t" style="right:53.5px;top:527px;color:#8a8a8a;">7</div>
<div class="t" style="right:36.5px;top:527px;color:#8a8a8a;">8</div>
<div class="t" style="right:19.5px;top:527px;color:#8a8a8a;">9</div>
<!-- part4 -->
<svg width="0" height="0" style="left:0;top:0"><defs><linearGradient id="cgd" x1="0" y1="0" x2="1" y2="1"><stop offset="0" stop-color="#d2d2cd"/><stop offset="1" stop-color="#ffffff"/></linearGradient></defs></svg>
<div style="left:312px;top:298px;width:598px;height:418px;border-radius:5px;background:#f0f1f3;box-shadow:2px 2px 6px rgba(60,40,0,.35)"></div>
<div style="left:314px;top:300px;width:595px;height:21px;background:linear-gradient(#e3e6ea,#cbced4 22%,#c6c9cf 34%,#b3bcc9 40%,#c4ccd6 60%,#e2e6ec 85%,#fbfcfd);border-radius:3px 3px 0 0"></div>
<div class="t" style="left:338px;top:303px;font-weight:bold;font-size:11.5px;color:#68717e;line-height:13px;text-shadow:0 1px 0 rgba(255,255,255,.7)">Modus</div>
<svg style="left:876px;top:305px" width="30" height="10"><rect x="1" y="1" width="9" height="2" fill="#3d4148"/><rect x="1.500" y="3.500" width="8" height="4" fill="none" stroke="#7d8fa9"/><rect x="1" y="8" width="9" height="1" fill="#fff"/><path d="M19.500 1.200l7 6.600m0-6.600l-7 6.600" stroke="#6f809a" stroke-width="2.200"/><path d="M18.500 1h3M24.500 1h3" stroke="#3d4148" stroke-width="1"/><path d="M18.500 8.500h3M24.500 8.500h3" stroke="#fff" stroke-width="1"/></svg>
<div style="left:314px;top:321px;width:595px;height:1px;background:#62656a"></div>
<div style="left:314px;top:322px;width:1px;height:392px;background:#aeb2b6"></div>
<div style="left:315px;top:322px;width:1px;height:392px;background:#5f6267"></div>
<div style="left:907px;top:322px;width:1px;height:392px;background:#777a7f"></div>
<svg style="left:305px;top:290px" width="612" height="432"><rect x="7.800" y="8.400" width="597" height="416.600" rx="4.500" fill="none" stroke="#f51414" stroke-width="2.200"/></svg>
<div style="left:317px;top:325px;width:165px;height:17px;border:1px solid #b9bdc4;border-top-color:#fff;border-left-color:#fff;background:#f3f4f5"></div>
<div class="t" style="left:321px;top:328px;font-weight:bold">· WYBIERZ PRACOWNIKÓW ·</div>
<div style="left:316px;top:343px;width:591px;height:2px;background:#5f6267"></div>
<div style="left:455px;top:346px;width:1px;height:41px;background:#7c7f84"></div>
<div style="left:316px;top:387px;width:591px;height:2px;background:#5f6267"></div>
<div class="a" style="left:288.0px;width:90px;text-align:center;top:371px;letter-spacing:-0.25px">Dodaj</div>
<div class="a" style="left:324.0px;width:90px;text-align:center;top:371px;letter-spacing:-0.25px">Edytuj</div>
<div class="a" style="left:360.5px;width:90px;text-align:center;top:371px;letter-spacing:-0.25px">Klonuj</div>
<div class="a" style="left:394.5px;width:90px;text-align:center;top:371px;letter-spacing:-0.25px">Usuń</div>
<div class="a" style="left:432.5px;width:90px;text-align:center;top:371px;letter-spacing:-0.25px">Rozlicz</div>
<div class="a" style="left:486.0px;width:90px;text-align:center;top:371px;letter-spacing:-0.25px">Identyfikator</div>
<div class="a" style="left:557.0px;width:90px;text-align:center;top:371px;letter-spacing:-0.25px">Zakończ dzień</div>
<div class="a" style="left:705.5px;width:90px;text-align:center;top:371px;letter-spacing:-0.25px">Odśwież</div>
<div class="a" style="left:747.0px;width:90px;text-align:center;top:371px;letter-spacing:-0.25px">Drukuj</div>
<div class="a" style="left:787.5px;width:90px;text-align:center;top:371px;letter-spacing:-0.25px">Eksport</div>
<div class="a" style="left:827.5px;width:90px;text-align:center;top:371px;letter-spacing:-0.25px">Widok</div>
<svg style="left:897px;top:364px" width="7" height="4"><path d="M0 0h7l-3.500 4z" fill="#111"/></svg>
<div style="left:316px;top:389px;width:575px;height:19px;background:linear-gradient(#ffffff,#f7f7f8 40%,#dedfe3);border-bottom:1px solid #74777c"></div>
<div style="left:316px;top:389px;width:1px;height:19px;background:#7c7f84"></div>
<div style="left:327px;top:390px;width:1px;height:17px;background:#878a90"></div>
<div style="left:328px;top:390px;width:1px;height:17px;background:rgba(255,255,255,.8)"></div>
<div style="left:347px;top:390px;width:1px;height:17px;background:#878a90"></div>
<div style="left:348px;top:390px;width:1px;height:17px;background:rgba(255,255,255,.8)"></div>
<div class="t" style="left:350px;top:393px;">Grupa</div>
<div style="left:447px;top:390px;width:1px;height:17px;background:#878a90"></div>
<div style="left:448px;top:390px;width:1px;height:17px;background:rgba(255,255,255,.8)"></div>
<div class="t" style="left:450px;top:393px;">Kod</div>
<div style="left:547px;top:390px;width:1px;height:17px;background:#878a90"></div>
<div style="left:548px;top:390px;width:1px;height:17px;background:rgba(255,255,255,.8)"></div>
<div class="t" style="left:550px;top:393px;">Imię</div>
<div style="left:647px;top:390px;width:1px;height:17px;background:#878a90"></div>
<div style="left:648px;top:390px;width:1px;height:17px;background:rgba(255,255,255,.8)"></div>
<div class="t" style="left:650px;top:393px;">Nazwisko</div>
<div style="left:747px;top:390px;width:1px;height:17px;background:#878a90"></div>
<div style="left:748px;top:390px;width:1px;height:17px;background:rgba(255,255,255,.8)"></div>
<div class="t" style="left:750px;top:393px;">Czas pracy...</div>
<div style="left:817px;top:390px;width:1px;height:17px;background:#878a90"></div>
<div style="left:818px;top:390px;width:1px;height:17px;background:rgba(255,255,255,.8)"></div>
<div class="t" style="left:820px;top:393px;">Stawka</div>
<div style="left:887px;top:390px;width:1px;height:17px;background:#878a90"></div>
<div style="left:888px;top:390px;width:1px;height:17px;background:rgba(255,255,255,.8)"></div>
<div class="t" style="left:890px;top:393px;">I</div>
<svg style="left:317px;top:393px" width="10" height="10"><path d="M4.500 .5v8M.5 4.500h8M1.700 1.700l5.600 5.600M7.300 1.700l-5.600 5.600" stroke="#6c6aa0" stroke-width=".9"/></svg>
<svg style="left:732px;top:395px" width="10" height="6"><path d="M0 5.500h9.500L4.750 0z" fill="#5f6196"/></svg>
<div style="left:328px;top:408px;width:563px;height:19px;background:#f4f7fd"></div>
<div style="left:328px;top:408px;width:560px;height:19px;background:#316ac5"></div>
<div style="left:328px;top:427px;width:563px;height:1px;background:#e2e4e4"></div>
<div style="left:316px;top:408px;width:12px;height:20px;background:linear-gradient(160deg,#ffffff,#f3f3f5 40%,#cfd2d7);border-bottom:1px solid #7c7f84;border-right:1px solid #7c7f84;border-left:1px solid #7c7f84"></div>
<svg style="left:331px;top:412px" width="12" height="12"><rect x=".5" y=".5" width="11" height="11" fill="url(#cgd)" stroke="#8e9aa8"/><rect x="2.500" y="2.500" width="7" height="7" fill="none" stroke="#ffffff" stroke-opacity=".6"/></svg>
<div class="t" style="left:350px;top:411px;color:#fff;width:97px;overflow:hidden">NIEOKREŚLONA</div>
<div class="t" style="left:450px;top:411px;color:#fff;width:97px;overflow:hidden">BRAK</div>
<div class="t" style="right:444px;top:411px;color:#fff">0</div>
<div class="t" style="right:374px;top:411px;color:#fff">0,00</div>
<div style="left:328px;top:428px;width:563px;height:19px;background:#f5fbf1"></div>
<div style="left:328px;top:428px;width:560px;height:19px;background:#f5fbf1"></div>
<div style="left:328px;top:447px;width:563px;height:1px;background:#e2e4e4"></div>
<div style="left:316px;top:428px;width:12px;height:20px;background:linear-gradient(160deg,#ffffff,#f3f3f5 40%,#cfd2d7);border-bottom:1px solid #7c7f84;border-right:1px solid #7c7f84;border-left:1px solid #7c7f84"></div>
<svg style="left:331px;top:432px" width="12" height="12"><rect x=".5" y=".5" width="11" height="11" fill="url(#cgd)" stroke="#8e9aa8"/><rect x="2.500" y="2.500" width="7" height="7" fill="none" stroke="#ffffff" stroke-opacity=".6"/><path d="M3 6l2.1 2.4 4-4.900" stroke="#3c66b4" stroke-width="1.700" fill="none"/></svg>
<div class="t" style="left:350px;top:431px;color:#000;width:97px;overflow:hidden">Kopiści</div>
<div class="t" style="left:450px;top:431px;color:#000;width:97px;overflow:hidden">Jan Kowalski</div>
<div class="t" style="left:550px;top:431px;color:#000;width:97px;overflow:hidden">Jan</div>
<div class="t" style="left:650px;top:431px;color:#000;width:97px;overflow:hidden">Kowalski</div>
<div class="t" style="right:444px;top:431px;color:#000">8</div>
<div class="t" style="right:374px;top:431px;color:#000">0,00</div>
<div style="left:328px;top:448px;width:563px;height:19px;background:#f0f5fd"></div>
<div style="left:328px;top:448px;width:560px;height:19px;background:#f0f5fd"></div>
<div style="left:328px;top:467px;width:563px;height:1px;background:#e2e4e4"></div>
<div style="left:316px;top:448px;width:12px;height:20px;background:linear-gradient(160deg,#ffffff,#f3f3f5 40%,#cfd2d7);border-bottom:1px solid #7c7f84;border-right:1px solid #7c7f84;border-left:1px solid #7c7f84"></div>
<svg style="left:331px;top:452px" width="12" height="12"><rect x=".5" y=".5" width="11" height="11" fill="url(#cgd)" stroke="#8e9aa8"/><rect x="2.500" y="2.500" width="7" height="7" fill="none" stroke="#ffffff" stroke-opacity=".6"/></svg>
<div class="t" style="left:350px;top:451px;color:#000;width:97px;overflow:hidden">Introligatorzy prz...</div>
<div class="t" style="left:450px;top:451px;color:#000;width:97px;overflow:hidden">Antoni Krzak</div>
<div class="t" style="left:550px;top:451px;color:#000;width:97px;overflow:hidden">Antoni</div>
<div class="t" style="left:650px;top:451px;color:#000;width:97px;overflow:hidden">Krzak</div>
<div class="t" style="right:444px;top:451px;color:#000">8</div>
<div class="t" style="right:374px;top:451px;color:#000">0,00</div>
<div style="left:328px;top:468px;width:563px;height:19px;background:#f5fbf1"></div>
<div style="left:328px;top:468px;width:560px;height:19px;background:#f5fbf1"></div>
<div style="left:328px;top:487px;width:563px;height:1px;background:#e2e4e4"></div>
<div style="left:316px;top:468px;width:12px;height:20px;background:linear-gradient(160deg,#ffffff,#f3f3f5 40%,#cfd2d7);border-bottom:1px solid #7c7f84;border-right:1px solid #7c7f84;border-left:1px solid #7c7f84"></div>
<svg style="left:331px;top:472px" width="12" height="12"><rect x=".5" y=".5" width="11" height="11" fill="url(#cgd)" stroke="#8e9aa8"/><rect x="2.500" y="2.500" width="7" height="7" fill="none" stroke="#ffffff" stroke-opacity=".6"/></svg>
<div class="t" style="left:350px;top:471px;color:#000;width:97px;overflow:hidden">Introligatorzy apl...</div>
<div class="t" style="left:450px;top:471px;color:#000;width:97px;overflow:hidden">Arkadiusz Mazur</div>
<div class="t" style="left:550px;top:471px;color:#000;width:97px;overflow:hidden">Arkadiusz</div>
<div class="t" style="left:650px;top:471px;color:#000;width:97px;overflow:hidden">Mazur</div>
<div class="t" style="right:444px;top:471px;color:#000">8</div>
<div class="t" style="right:374px;top:471px;color:#000">0,00</div>
<div style="left:328px;top:488px;width:563px;height:19px;background:#f0f5fd"></div>
<div style="left:328px;top:488px;width:560px;height:19px;background:#f0f5fd"></div>
<div style="left:328px;top:507px;width:563px;height:1px;background:#e2e4e4"></div>
<div style="left:316px;top:488px;width:12px;height:20px;background:linear-gradient(160deg,#ffffff,#f3f3f5 40%,#cfd2d7);border-bottom:1px solid #7c7f84;border-right:1px solid #7c7f84;border-left:1px solid #7c7f84"></div>
<svg style="left:331px;top:492px" width="12" height="12"><rect x=".5" y=".5" width="11" height="11" fill="url(#cgd)" stroke="#8e9aa8"/><rect x="2.500" y="2.500" width="7" height="7" fill="none" stroke="#ffffff" stroke-opacity=".6"/></svg>
<div class="t" style="left:350px;top:491px;color:#000;width:97px;overflow:hidden">UR</div>
<div class="t" style="left:450px;top:491px;color:#000;width:97px;overflow:hidden">Paweł Młynarczyk</div>
<div class="t" style="left:550px;top:491px;color:#000;width:97px;overflow:hidden">Paweł</div>
<div class="t" style="left:650px;top:491px;color:#000;width:97px;overflow:hidden">Młynarczyk</div>
<div class="t" style="right:444px;top:491px;color:#000">8</div>
<div class="t" style="right:374px;top:491px;color:#000">0,00</div>
<div style="left:328px;top:508px;width:563px;height:19px;background:#f5fbf1"></div>
<div style="left:328px;top:508px;width:560px;height:19px;background:#f5fbf1"></div>
<div style="left:328px;top:527px;width:563px;height:1px;background:#e2e4e4"></div>
<div style="left:316px;top:508px;width:12px;height:20px;background:linear-gradient(160deg,#ffffff,#f3f3f5 40%,#cfd2d7);border-bottom:1px solid #7c7f84;border-right:1px solid #7c7f84;border-left:1px solid #7c7f84"></div>
<svg style="left:331px;top:512px" width="12" height="12"><rect x=".5" y=".5" width="11" height="11" fill="url(#cgd)" stroke="#8e9aa8"/><rect x="2.500" y="2.500" width="7" height="7" fill="none" stroke="#ffffff" stroke-opacity=".6"/><path d="M3 6l2.1 2.4 4-4.900" stroke="#3c66b4" stroke-width="1.700" fill="none"/></svg>
<div class="t" style="left:350px;top:511px;color:#000;width:97px;overflow:hidden">Kopiści</div>
<div class="t" style="left:450px;top:511px;color:#000;width:97px;overflow:hidden">Adam Nowak</div>
<div class="t" style="left:550px;top:511px;color:#000;width:97px;overflow:hidden">Adam</div>
<div class="t" style="left:650px;top:511px;color:#000;width:97px;overflow:hidden">Nowak</div>
<div class="t" style="right:444px;top:511px;color:#000">8</div>
<div class="t" style="right:374px;top:511px;color:#000">12,54</div>
<div style="left:328px;top:528px;width:563px;height:19px;background:#f0f5fd"></div>
<div style="left:328px;top:528px;width:560px;height:19px;background:#f0f5fd"></div>
<div style="left:328px;top:547px;width:563px;height:1px;background:#e2e4e4"></div>
<div style="left:316px;top:528px;width:12px;height:20px;background:linear-gradient(160deg,#ffffff,#f3f3f5 40%,#cfd2d7);border-bottom:1px solid #7c7f84;border-right:1px solid #7c7f84;border-left:1px solid #7c7f84"></div>
<svg style="left:331px;top:532px" width="12" height="12"><rect x=".5" y=".5" width="11" height="11" fill="url(#cgd)" stroke="#8e9aa8"/><rect x="2.500" y="2.500" width="7" height="7" fill="none" stroke="#ffffff" stroke-opacity=".6"/></svg>
<div class="t" style="left:350px;top:531px;color:#000;width:97px;overflow:hidden">Introligatorzy apl...</div>
<div class="t" style="left:450px;top:531px;color:#000;width:97px;overflow:hidden">Elżbieta Podlewska</div>
<div class="t" style="left:550px;top:531px;color:#000;width:97px;overflow:hidden">Elżbieta</div>
<div class="t" style="left:650px;top:531px;color:#000;width:97px;overflow:hidden">Podlewska</div>
<div class="t" style="right:444px;top:531px;color:#000">8</div>
<div class="t" style="right:374px;top:531px;color:#000">0,00</div>
<div style="left:328px;top:548px;width:563px;height:19px;background:#f5fbf1"></div>
<div style="left:328px;top:548px;width:560px;height:19px;background:#f5fbf1"></div>
<div style="left:328px;top:567px;width:563px;height:1px;background:#e2e4e4"></div>
<div style="left:316px;top:548px;width:12px;height:20px;background:linear-gradient(160deg,#ffffff,#f3f3f5 40%,#cfd2d7);border-bottom:1px solid #7c7f84;border-right:1px solid #7c7f84;border-left:1px solid #7c7f84"></div>
<svg style="left:331px;top:552px" width="12" height="12"><rect x=".5" y=".5" width="11" height="11" fill="url(#cgd)" stroke="#8e9aa8"/><rect x="2.500" y="2.500" width="7" height="7" fill="none" stroke="#ffffff" stroke-opacity=".6"/></svg>
<div class="t" style="left:350px;top:551px;color:#000;width:97px;overflow:hidden">Introligatorzy prz...</div>
<div class="t" style="left:450px;top:551px;color:#000;width:97px;overflow:hidden">Test Pracownik</div>
<div class="t" style="left:550px;top:551px;color:#000;width:97px;overflow:hidden">Test</div>
<div class="t" style="left:650px;top:551px;color:#000;width:97px;overflow:hidden">Pracownik</div>
<div class="t" style="right:444px;top:551px;color:#000">8</div>
<div class="t" style="right:374px;top:551px;color:#000">14,23</div>
<div style="left:328px;top:568px;width:563px;height:19px;background:#f0f5fd"></div>
<div style="left:328px;top:568px;width:560px;height:19px;background:#f0f5fd"></div>
<div style="left:328px;top:587px;width:563px;height:1px;background:#e2e4e4"></div>
<div style="left:316px;top:568px;width:12px;height:20px;background:linear-gradient(160deg,#ffffff,#f3f3f5 40%,#cfd2d7);border-bottom:1px solid #7c7f84;border-right:1px solid #7c7f84;border-left:1px solid #7c7f84"></div>
<svg style="left:331px;top:572px" width="12" height="12"><rect x=".5" y=".5" width="11" height="11" fill="url(#cgd)" stroke="#8e9aa8"/><rect x="2.500" y="2.500" width="7" height="7" fill="none" stroke="#ffffff" stroke-opacity=".6"/><path d="M3 6l2.1 2.4 4-4.900" stroke="#3c66b4" stroke-width="1.700" fill="none"/></svg>
<div class="t" style="left:350px;top:571px;color:#000;width:97px;overflow:hidden">Introligatorzy prz...</div>
<div class="t" style="left:450px;top:571px;color:#000;width:97px;overflow:hidden">Michał Słowik</div>
<div class="t" style="left:550px;top:571px;color:#000;width:97px;overflow:hidden">Michał</div>
<div class="t" style="left:650px;top:571px;color:#000;width:97px;overflow:hidden">Słowik</div>
<div class="t" style="right:444px;top:571px;color:#000">8</div>
<div class="t" style="right:374px;top:571px;color:#000">0,00</div>
<div style="left:328px;top:588px;width:563px;height:19px;background:#f5fbf1"></div>
<div style="left:328px;top:588px;width:560px;height:19px;background:#f5fbf1"></div>
<div style="left:328px;top:607px;width:563px;height:1px;background:#e2e4e4"></div>
<div style="left:316px;top:588px;width:12px;height:20px;background:linear-gradient(160deg,#ffffff,#f3f3f5 40%,#cfd2d7);border-bottom:1px solid #7c7f84;border-right:1px solid #7c7f84;border-left:1px solid #7c7f84"></div>
<svg style="left:331px;top:592px" width="12" height="12"><rect x=".5" y=".5" width="11" height="11" fill="url(#cgd)" stroke="#8e9aa8"/><rect x="2.500" y="2.500" width="7" height="7" fill="none" stroke="#ffffff" stroke-opacity=".6"/><path d="M3 6l2.1 2.4 4-4.900" stroke="#3c66b4" stroke-width="1.700" fill="none"/></svg>
<div class="t" style="left:350px;top:591px;color:#000;width:97px;overflow:hidden">Drukarze</div>
<div class="t" style="left:450px;top:591px;color:#000;width:97px;overflow:hidden">Andrzej Strojek</div>
<div class="t" style="left:550px;top:591px;color:#000;width:97px;overflow:hidden">Andrzej</div>
<div class="t" style="left:650px;top:591px;color:#000;width:97px;overflow:hidden">Strojek</div>
<div class="t" style="right:444px;top:591px;color:#000">8</div>
<div class="t" style="right:374px;top:591px;color:#000">0,00</div>
<div style="left:328px;top:608px;width:563px;height:19px;background:#f0f5fd"></div>
<div style="left:328px;top:608px;width:560px;height:19px;background:#f0f5fd"></div>
<div style="left:328px;top:627px;width:563px;height:1px;background:#e2e4e4"></div>
<div style="left:316px;top:608px;width:12px;height:20px;background:linear-gradient(160deg,#ffffff,#f3f3f5 40%,#cfd2d7);border-bottom:1px solid #7c7f84;border-right:1px solid #7c7f84;border-left:1px solid #7c7f84"></div>
<svg style="left:331px;top:612px" width="12" height="12"><rect x=".5" y=".5" width="11" height="11" fill="url(#cgd)" stroke="#8e9aa8"/><rect x="2.500" y="2.500" width="7" height="7" fill="none" stroke="#ffffff" stroke-opacity=".6"/></svg>
<div class="t" style="left:350px;top:611px;color:#000;width:97px;overflow:hidden">UR</div>
<div class="t" style="left:450px;top:611px;color:#000;width:97px;overflow:hidden">Tomasz Surowiec</div>
<div class="t" style="left:550px;top:611px;color:#000;width:97px;overflow:hidden">Tomasz</div>
<div class="t" style="left:650px;top:611px;color:#000;width:97px;overflow:hidden">Surowiec</div>
<div class="t" style="right:444px;top:611px;color:#000">8</div>
<div class="t" style="right:374px;top:611px;color:#000">0,00</div>
<div style="left:347px;top:428px;width:1px;height:200px;background:#e0e2e3"></div>
<div style="left:347px;top:408px;width:1px;height:19px;background:#e8eefa"></div>
<div style="left:447px;top:428px;width:1px;height:200px;background:#e0e2e3"></div>
<div style="left:447px;top:408px;width:1px;height:19px;background:#e8eefa"></div>
<div style="left:547px;top:428px;width:1px;height:200px;background:#e0e2e3"></div>
<div style="left:547px;top:408px;width:1px;height:19px;background:#e8eefa"></div>
<div style="left:647px;top:428px;width:1px;height:200px;background:#e0e2e3"></div>
<div style="left:647px;top:408px;width:1px;height:19px;background:#e8eefa"></div>
<div style="left:747px;top:428px;width:1px;height:200px;background:#e0e2e3"></div>
<div style="left:747px;top:408px;width:1px;height:19px;background:#e8eefa"></div>
<div style="left:817px;top:428px;width:1px;height:200px;background:#e0e2e3"></div>
<div style="left:817px;top:408px;width:1px;height:19px;background:#e8eefa"></div>
<div style="left:887px;top:428px;width:1px;height:200px;background:#e0e2e3"></div>
<div style="left:887px;top:408px;width:1px;height:19px;background:#e8eefa"></div>
<div style="left:328px;top:408px;width:560px;height:1px;background:repeating-linear-gradient(to right,#e8a33d 0,#e8a33d 1px,#5a78b8 1px,#5a78b8 2px)"></div>
<div style="left:328px;top:426px;width:560px;height:1px;background:repeating-linear-gradient(to right,#e8a33d 0,#e8a33d 1px,#5a78b8 1px,#5a78b8 2px)"></div>
<svg style="left:318px;top:413px" width="8" height="10"><path d="M1 .8l4.500 4.200L1 9.200" stroke="#5b5d92" stroke-width="2" fill="none"/></svg>
<div style="left:316px;top:628px;width:575px;height:1px;background:#77797e"></div>
<div style="left:316px;top:629px;width:575px;height:27px;background:linear-gradient(#fbfbfc,#f1f2f4 45%,#dcdee2)"></div>
<div style="left:450px;top:631px;width:96px;height:23px;border:1px solid #b7bbc2;background:linear-gradient(#fbfbfc,#f2f3f5)"></div>
<div class="t" style="left:458px;top:637px;">14 pozycji</div>
<div style="left:316px;top:656px;width:575px;height:1px;background:#77797e"></div>
<div style="left:316px;top:657px;width:575px;height:17px;background:linear-gradient(#fdfdfd,#f0f1f3)"></div>
<div style="left:332px;top:659px;width:518px;height:13px;border:1px solid #a6a9ae;border-radius:2px;background:linear-gradient(#efeff1,#dcdde0 50%,#c9cbcf)"></div>
<svg style="left:584px;top:662px" width="12" height="8"><path d="M.5 0v7M3.500 0v7M6.500 0v7M9.500 0v7" stroke="#7d8088"/></svg>
<svg style="left:320px;top:660px" width="6" height="11"><path d="M5.500 0v10L0 5z" fill="#45558a"/></svg>
<svg style="left:881px;top:660px" width="6" height="11"><path d="M.5 0v10L6 5z" fill="#45558a"/></svg>
<div style="left:891px;top:389px;width:16px;height:285px;background:linear-gradient(to right,#fdfdfd,#f0f1f3)"></div>
<div style="left:893px;top:404px;width:13px;height:186px;border:1px solid #a6a9ae;border-radius:2px;background:linear-gradient(to right,#efeff1,#dcdde0 50%,#c9cbcf)"></div>
<svg style="left:895px;top:492px" width="8" height="12"><path d="M0 .5h8M0 3.500h8M0 6.500h8M0 9.500h8" stroke="#7d8088"/></svg>
<svg style="left:894px;top:393px" width="10" height="6"><path d="M0 5.500h9.500L4.750 0z" fill="#45558a"/></svg>
<svg style="left:894px;top:646px" width="10" height="6"><path d="M0 0h9.500L4.750 5.500z" fill="#45558a"/></svg>
<div style="left:316px;top:674px;width:591px;height:1px;background:#77797e"></div>
<div style="left:325px;top:679px;width:100px;height:30px;border:1px solid #8f9399;border-radius:3px;background:linear-gradient(#ffffff,#f1f2f4 45%,#d6dbe3 52%,#e6e9ee);box-shadow:inset 0 0 0 1px rgba(255,255,255,.75)"></div>
<div class="t" style="left:365px;top:687px;font-weight:bold;font-size:12px;letter-spacing:-0.4px">Wybierz</div>
<div style="left:798px;top:679px;width:100px;height:30px;border:1px solid #8f9399;border-radius:3px;background:linear-gradient(#ffffff,#f1f2f4 45%,#d6dbe3 52%,#e6e9ee);box-shadow:inset 0 0 0 1px rgba(255,255,255,.75)"></div>
<div class="t" style="left:843px;top:687px;font-weight:bold;font-size:12px;letter-spacing:-0.4px">Anuluj</div>
<!-- part5 -->
<svg width="0" height="0" style="left:0;top:0"><defs>
<linearGradient id="rg" x1="0" y1="0" x2="0" y2="1"><stop offset="0" stop-color="#e86a6a"/><stop offset=".45" stop-color="#e01010"/><stop offset="1" stop-color="#c80000"/></linearGradient>
<linearGradient id="rg2" x1="0" y1="0" x2="1" y2="1"><stop offset="0" stop-color="#ef7d7d"/><stop offset=".5" stop-color="#e00808"/><stop offset="1" stop-color="#d00000"/></linearGradient>
<radialGradient id="sph" cx=".35" cy=".3" r=".8"><stop offset="0" stop-color="#ff9c9c"/><stop offset=".35" stop-color="#e31414"/><stop offset="1" stop-color="#8c0000"/></radialGradient>
<radialGradient id="sph2" cx=".7" cy=".45" r=".7"><stop offset="0" stop-color="#f0a030"/><stop offset=".5" stop-color="#d83018"/><stop offset="1" stop-color="#900000"/></radialGradient>
<radialGradient id="ball" cx=".4" cy=".3" r=".9"><stop offset="0" stop-color="#f08080"/><stop offset=".4" stop-color="#dc1010"/><stop offset="1" stop-color="#a00000"/></radialGradient>
<radialGradient id="lens" cx=".35" cy=".3" r=".8"><stop offset="0" stop-color="#d8f0f8"/><stop offset=".4" stop-color="#86bdd4"/><stop offset="1" stop-color="#5a9cba"/></radialGradient>
<radialGradient id="glass" cx=".5" cy=".35" r=".7"><stop offset="0" stop-color="#ffffff"/><stop offset=".7" stop-color="#d0d0d0"/><stop offset="1" stop-color="#606060"/></radialGradient>
<linearGradient id="bl" x1="0" y1="0" x2="0" y2="1"><stop offset="0" stop-color="#8cc4ff"/><stop offset=".5" stop-color="#2c8cff"/><stop offset="1" stop-color="#1060e0"/></linearGradient>
<linearGradient id="circ" x1="0" y1="0" x2="0" y2="1"><stop offset="0" stop-color="#ee4444"/><stop offset="1" stop-color="#d01c1c"/></linearGradient>
<linearGradient id="gloss" x1="0" y1="0" x2="1" y2="0"><stop offset="0" stop-color="#f09a9a"/><stop offset=".5" stop-color="#f4c8c8"/><stop offset="1" stop-color="#ececec"/></linearGradient><linearGradient id="prn" x1="0" y1="0" x2=".6" y2="1"><stop offset="0" stop-color="#f6b6b6"/><stop offset=".5" stop-color="#e85a5a"/><stop offset="1" stop-color="#d42020"/></linearGradient><linearGradient id="pane" x1="0" y1="0" x2="1" y2="1"><stop offset="0" stop-color="#ffffff"/><stop offset=".6" stop-color="#e4e4e4"/><stop offset="1" stop-color="#c8c8c8"/></linearGradient>
<filter id="sh" x="-30%" y="-30%" width="170%" height="170%"><feGaussianBlur in="SourceAlpha" stdDeviation="1.6"/><feOffset dx="1.5" dy="2"/><feComponentTransfer><feFuncA type="linear" slope=".45"/></feComponentTransfer><feMerge><feMergeNode/><feMergeNode in="SourceGraphic"/></feMerge></filter>
<g id="ic_refresh"><circle cx="11" cy="11" r="10.300" fill="#d40404" stroke="#2c0404" stroke-width="1.200"/><path d="M1.300 10.500a9.700 9.700 0 0 1 19.400-.5c-2.500-2.200-6-2.600-9.500-1.500s-7 2-9.900 2z" fill="url(#gloss)"/><path d="M4.500 9.300l7.300-2.200-.5-3.200 6.600 4.300-4.600 4.600-.4-2.700-7 2.400z" fill="#e23434"/><path d="M4.600 15.600l5.200-4.300.4 2.300 3.500-1.300 3.300-4.500c1.500 0 2.700.8 3 2.200-1 3-3 5-5.500 6l-3.400 1 .3 2.300z" fill="#f3f3f3"/><path d="M16.500 7.500c2 0 3.800.8 4.200 2.500-.6 2.600-2 4.600-3.900 5.800z" fill="#d6d6d6"/></g>
<g id="ic_view"><rect x=".7" y=".7" width="20.600" height="19.600" rx="3" fill="#e23030" stroke="#4d0c0c" stroke-width="1.300"/><rect x="1.500" y="1.500" width="19" height="4" rx="2" fill="#e98d8d"/><rect x="2.300" y="6" width="17.400" height="12.300" fill="url(#pane)"/><rect x="2.300" y="6" width="2.600" height="12.300" fill="#fff"/><rect x="4.900" y="6" width="1.200" height="12.300" fill="#c81818"/><path d="M6.500 7.500h13M6.500 9.500h13M6.500 11.500h13" stroke="#fff" stroke-width="1"/><path d="M2 18.800h18" stroke="#8a1010" stroke-width="1.200"/></g>
</defs></svg>
<svg style="left:1151px;top:53px" width="22" height="22"><use href="#ic_view"/></svg>
<svg style="left:1214px;top:53px" width="22" height="22"><use href="#ic_refresh"/></svg>
<svg style="left:712px;top:123px" width="20" height="19"><path d="M11 10l6.300 6.300" stroke="#333" stroke-width="3" stroke-linecap="round"/><path d="M13.600 12.600l3.900 3.900" stroke="#f00000" stroke-width="3.200" stroke-linecap="round"/><circle cx="7.800" cy="6.600" r="4.900" fill="url(#lens)" stroke="#0c0c0c" stroke-width="1.400"/><path d="M4.800 5.400a3.200 3.200 0 0 1 2.200-2" stroke="#fff" stroke-width="1.300" fill="none" opacity=".9"/></svg>
<svg style="left:734px;top:124px" width="17" height="17"><circle cx="8.300" cy="8.200" r="6.900" fill="url(#glass)" stroke="#0a0a0a" stroke-width="1.700"/><path d="M2 10.500a6.700 6.700 0 0 0 12.600 0" stroke="#000" stroke-width="2.400" fill="none"/><path d="M3 2.800l10.600 10.600M13.600 2.800L3 13.400" stroke="#dc0a0a" stroke-width="2.800"/></svg>
<svg style="left:321px;top:346px" width="23" height="23"><path d="M8.500 1.500h6v7h7v6h-7v7h-6v-7h-7v-6h7z" fill="url(#rg2)" stroke="#5a1616" stroke-width="1.400" stroke-linejoin="round"/></svg>
<svg style="left:357px;top:346px" width="24" height="24"><path d="M5 10.500h14l2.500 12h-20z" fill="#fff" stroke="#a8a8a8"/><path d="M5 14h11M4.500 17h9M4 20h12" stroke="#f3c4c4" stroke-width=".8"/><path d="M9.500 19.500l1.500-6.500 6-11 4.200 2.300-6 11z" fill="#e31212" stroke="#2a2a2a" stroke-width="1.300" stroke-linejoin="round"/><path d="M9.600 19.300l1.500-6.200 4 2.200z" fill="#f0b0b0" stroke="#2a2a2a" stroke-width=".8"/><path d="M15 15.300l6-11" stroke="#333" stroke-width="1.600"/></svg>
<svg style="left:392px;top:351px" width="24" height="14"><path d="M9 4.500c2.500.3 4 1 5.500 1l2 .2v3l-2 .1c-1.500 0-3 .8-5.500 1.200z" fill="#b80808"/><circle cx="6.900" cy="7.100" r="5" fill="url(#sph)" stroke="#5e0808" stroke-width=".8"/><circle cx="18.300" cy="7.100" r="3.600" fill="url(#sph2)" stroke="#6e1808" stroke-width=".7"/></svg>
<svg style="left:427px;top:353px" width="22" height="9"><rect x=".9" y="1.400" width="19.600" height="6" rx="1.800" fill="url(#rg2)" stroke="#5e1818" stroke-width="1.300"/></svg>
<svg style="left:466px;top:347px" width="22" height="22"><rect width="22" height="22" fill="#c6c6c6"/><ellipse cx="8" cy="4" rx="4.500" ry="3.300" fill="#f07828" stroke="#c04808" stroke-width=".8"/><path d="M6 4h4" stroke="#fff" stroke-width="1"/><circle cx="15.500" cy="3.800" r="3.300" fill="#f0e060" stroke="#a89820" stroke-width=".8"/><path d="M15.500 2v3.600" stroke="#fff" stroke-width="1"/><ellipse cx="16" cy="11" rx="3.600" ry="4.400" fill="#f4f4f4" stroke="#8a8a8a" stroke-width=".8"/><path d="M15 9.500c2-.8 2 1.200 1 1.500s-.5 2.200 1 1.300" stroke="#888" stroke-width=".8" fill="none"/><path d="M1 15.500h4v5h-4z" fill="#303848"/><path d="M5 16c3-1.500 6-.5 8 .5s5-1 8-2.500c.8 1.500-2 4.500-6 5.500s-7 1-10 .5z" fill="#f8a040" stroke="#c06010" stroke-width=".7"/><path d="M6 17.500c3 .8 7 .8 11-.8" stroke="#fff0c0" stroke-width=".8" fill="none"/></svg>
<svg style="left:520px;top:347px" width="23" height="22"><rect x="0" y=".5" width="15" height="10" fill="#111"/><path d="M2 1.500v7M4.500 1.500v7M6.500 1.500v7M9 1.500v7M11 1.500v7M13 1.500v7" stroke="#fff" stroke-width="1.100"/><path d="M9.800 21.500v-6.500c0-2.500 2-3.300 6.200-3.300s6.200.8 6.200 3.300v6.500z" fill="#fafafa" stroke="#111" stroke-width="1.200"/><path d="M15.300 13h1.400l.5 6.500-1.200 1.300-1.200-1.300z" fill="#111"/><circle cx="16" cy="7" r="4.400" fill="#f8c8a0" stroke="#b07848" stroke-width=".6"/><path d="M11.300 6.500c0-4 3-5.200 5.500-4.800s4.200 2.300 4 4.800c-1.500-1.800-3-2.500-5-2.300s-3.300 1-4.500 2.300z" fill="#f4c020" stroke="#b88a10" stroke-width=".5"/><circle cx="14.500" cy="7.500" r=".7" fill="#345"/><circle cx="17.500" cy="7.500" r=".7" fill="#345"/></svg>
<svg style="left:593px;top:349px" width="18" height="19"><rect x="1" y=".5" width="6" height="17.500" rx="1" fill="#e40c0c"/><rect x="11" y=".5" width="6" height="17.500" rx="1" fill="#e40c0c"/><path d="M1 18v-8c2.500 0 4.500-1.500 6-4V1.500C7 1 6.500.5 6 .5H2C1.500.5 1 1 1 1.500z" fill="#f26a6a" opacity=".7"/><path d="M11 18v-8c2.500 0 4.500-1.500 6-4V1.500c0-.5-.5-1-1-1h-4c-.5 0-1 .5-1 1z" fill="#f26a6a" opacity=".7"/></svg>
<svg style="left:739px;top:347px" width="22" height="22"><use href="#ic_refresh"/></svg>
<svg style="left:780px;top:346px" width="23" height="24"><path d="M1.500 4.800l6.500-2.300 1.500 8.500-6.500 2z" fill="#fff6f6" stroke="#de5a5a" stroke-width=".9"/><path d="M1.500 12.500l8-2.800 11.500 4-1 4.500-8 4.300-9.500-4z" fill="url(#prn)" stroke="#c01c1c" stroke-width=".8"/><path d="M2.500 13l7-2.300 10 3.500" stroke="#f7b4b4" stroke-width="1.200" fill="none"/><path d="M11.500 17.800l6-2.300 3.500 1.800-7 3.500z" fill="#fff" stroke="#d88" stroke-width=".6"/><path d="M9.500 1.300h8l4 4v10h-12z" fill="#fff" stroke="#5a5a5a" stroke-width="1"/><path d="M17.500 1.300v4h4" fill="#e8e8e8" stroke="#5a5a5a" stroke-width=".9"/><path d="M11.500 4.500h4.500M11.500 7h8M11.500 9.500h8M11.500 12h8" stroke="#555" stroke-width="1"/></svg>
<svg style="left:824px;top:346px" width="20" height="24"><path d="M.7 1.200h9.500l5 5v16.200h-14.500z" fill="#fbdddd" stroke="#a4a0a0" stroke-width="1"/><path d="M10.200 1.200v5h5" fill="#f6cccc" stroke="#a4a0a0" stroke-width=".8"/><path d="M3 4h4M3 6.300h6M3 8.600h9M3 10.900h8M3 13.200h6M3 15.500h5M3 17.800h5M3 20h7" stroke="#fff" stroke-width="1"/><path d="M3 4h2M3 6.300h3M3 8.600h5M3 10.900h4M3 13.200h3" stroke="#b9a5a5" stroke-width=".8"/><path transform="translate(0,-1.500)" d="M9.500 15l2.800-.4v-3.100l6.300 5.400-5.700 5.700-.6-2.900h-2.800z" fill="#e00606" stroke="#9c1010" stroke-width=".6" stroke-linejoin="round"/><path transform="translate(0,-1.500)" d="M9.800 15.200l2.800-.4v-2.700l4 3.400c-2.500.2-4.500 1-6.800 2.500z" fill="#f29a9a" opacity=".85"/></svg>
<svg style="left:861px;top:347px" width="22" height="22"><use href="#ic_view"/></svg>
<svg style="left:316px;top:301px" width="18" height="18"><circle cx="7" cy="5.500" r="3.300" fill="none" stroke="#38a038" stroke-width="2.200"/><circle cx="5" cy="10.500" r="3.300" fill="none" stroke="#2868c8" stroke-width="2.200"/><circle cx="12.500" cy="6.500" r="3.300" fill="none" stroke="#e8b820" stroke-width="2.200"/><circle cx="10.500" cy="12" r="3.300" fill="none" stroke="#e04820" stroke-width="2.200"/></svg>
<svg style="left:339px;top:682px" width="23" height="24"><path d="M11.200 1.400l10.300 8.200h-3.200v5h-14v-5h-3.300z" fill="url(#bl)" stroke="#1c2c48" stroke-width="1.200" stroke-linejoin="round"/><path d="M3 9.200h16.500" stroke="#e4f4ff" stroke-width="1" opacity=".55"/><rect x="4.700" y="16.200" width="13.600" height="2.600" rx=".8" fill="url(#bl)" stroke="#1c2c48" stroke-width=".9"/><rect x="5.600" y="19.900" width="11.600" height="2.400" rx=".8" fill="url(#bl)" stroke="#1c2c48" stroke-width=".9"/></svg>
<svg style="left:818px;top:684px" width="21" height="21" filter="url(#sh)"><path d="M2 5l3-3 5.500 5 5.500-5 3 3-5 5.500 5 5.500-3 3-5.500-5-5.500 5-3-3 5-5.500z" fill="url(#rg2)" stroke="#5a1414" stroke-width="1.300" stroke-linejoin="round"/></svg>
<svg style="left:700px;top:110px" width="44" height="44"><rect x="8.600" y="8.400" width="24.200" height="25.200" rx="6" fill="none" stroke="#f41414" stroke-width="2.200" filter="url(#sh)"/></svg>
<svg style="left:0;top:0" width="1258" height="809"><defs><linearGradient id="ar1" gradientUnits="userSpaceOnUse" x1="637" y1="82" x2="707.5" y2="119.5"><stop offset="0" stop-color="#f01c1c" stop-opacity=".2"/><stop offset=".5" stop-color="#f01c1c" stop-opacity=".8"/><stop offset=".8" stop-color="#fa0c0c" stop-opacity="1"/></linearGradient></defs><polygon points="636.8,82.4 695.5,119.6 691.8,122.5 707.5,119.5 701.2,104.8 700.9,109.5 637.2,81.6" fill="url(#ar1)" filter="url(#sh)"/></svg>
<svg style="left:0;top:0" width="1258" height="809"><defs><linearGradient id="ar2" gradientUnits="userSpaceOnUse" x1="193" y1="561" x2="311.8" y2="440"><stop offset="0" stop-color="#f01c1c" stop-opacity=".2"/><stop offset=".5" stop-color="#f01c1c" stop-opacity=".8"/><stop offset=".8" stop-color="#fa0c0c" stop-opacity="1"/></linearGradient></defs><polygon points="193.4,561.4 308.5,451.5 310.2,455.9 311.8,440.0 295.9,441.9 300.3,443.5 192.6,560.6" fill="url(#ar2)" filter="url(#sh)"/></svg>
<svg style="left:603px;top:50px" width="44" height="44"><circle cx="22" cy="22" r="13.600" fill="url(#circ)" stroke="#fbeaea" stroke-width="1.300" filter="url(#sh)"/><text x="22" y="27" text-anchor="middle" font-family="Liberation Sans,sans-serif" font-size="15" fill="#fff">1</text></svg>
<svg style="left:161.5px;top:550px" width="44" height="44"><circle cx="22" cy="22" r="13.600" fill="url(#circ)" stroke="#fbeaea" stroke-width="1.300" filter="url(#sh)"/><text x="22" y="27" text-anchor="middle" font-family="Liberation Sans,sans-serif" font-size="15" fill="#fff">2</text></svg>
</body></html>
